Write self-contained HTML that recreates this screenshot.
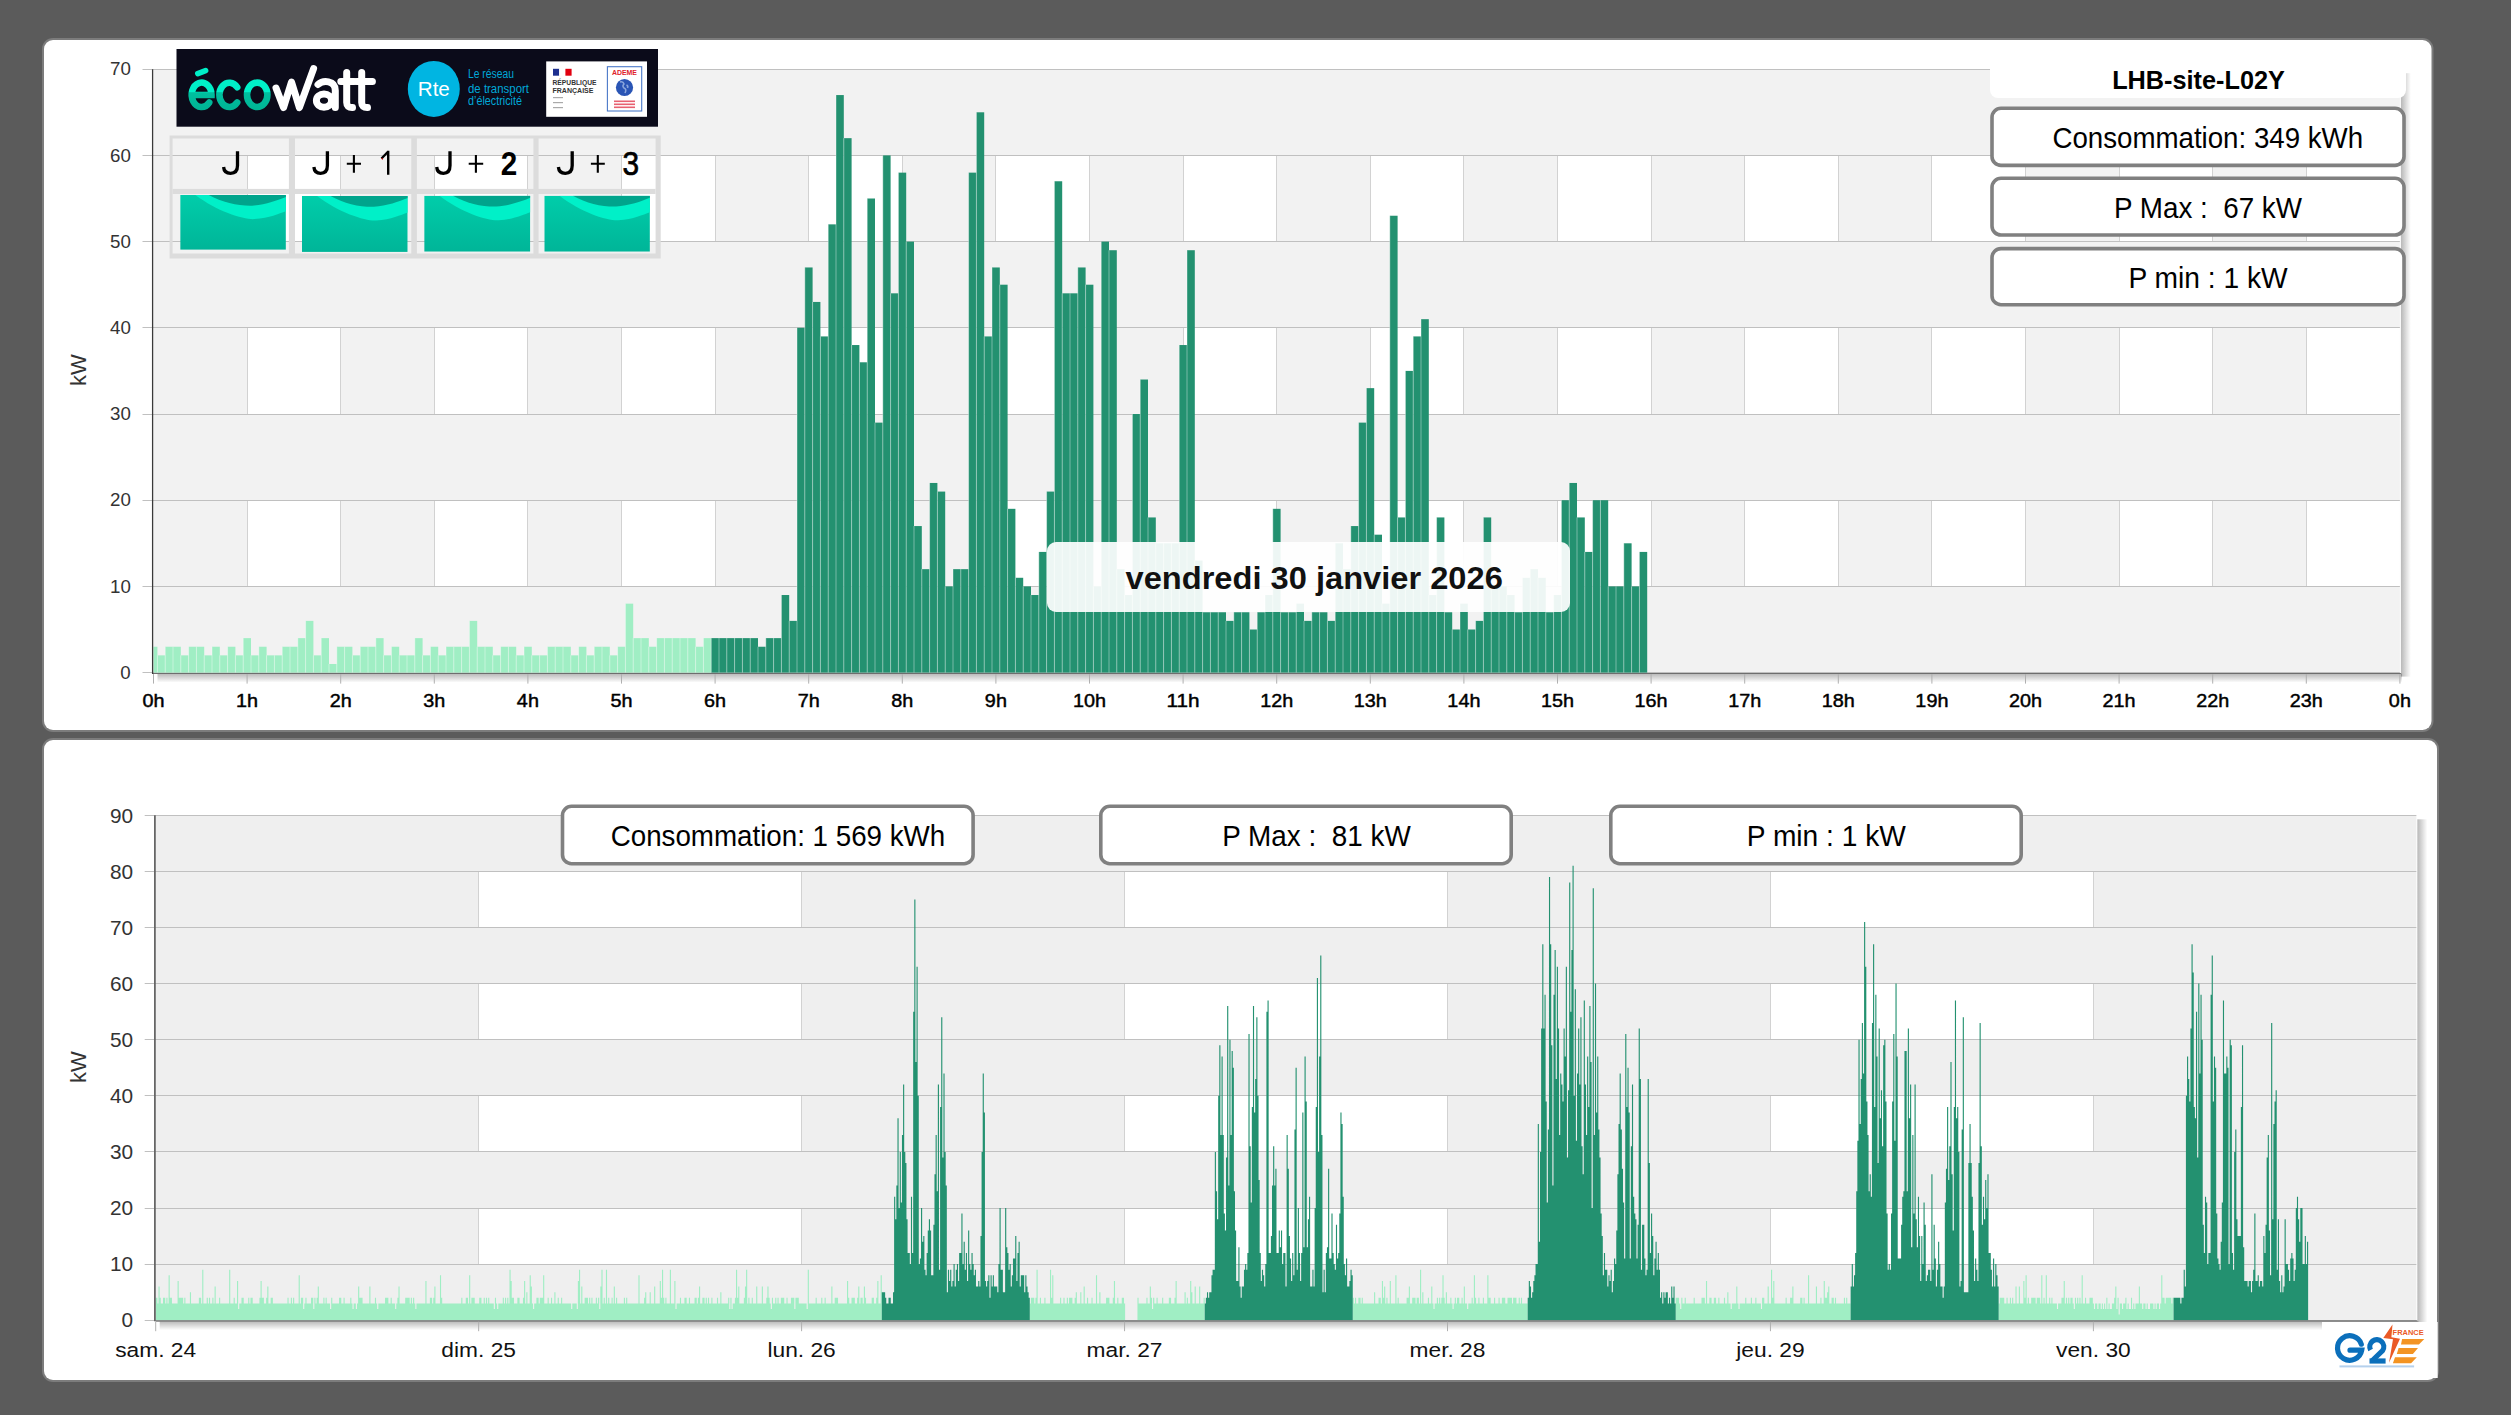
<!DOCTYPE html><html><head><meta charset="utf-8"><style>html,body{margin:0;padding:0;background:#5b5b5b;}body{width:2511px;height:1415px;overflow:hidden;} svg{display:block;}</style></head><body><svg width="2511" height="1415" viewBox="0 0 2511 1415"><defs><linearGradient id="shR" x1="0" x2="1" y1="0" y2="0"><stop offset="0" stop-color="#000" stop-opacity="0.28"/><stop offset="1" stop-color="#000" stop-opacity="0"/></linearGradient><linearGradient id="shB" x1="0" x2="0" y1="0" y2="1"><stop offset="0" stop-color="#000" stop-opacity="0.28"/><stop offset="1" stop-color="#000" stop-opacity="0"/></linearGradient><linearGradient id="teal" x1="0" x2="0" y1="0" y2="1"><stop offset="0" stop-color="#00cdaa"/><stop offset="1" stop-color="#00b598"/></linearGradient><linearGradient id="ecoG" x1="0" x2="0" y1="0" y2="1"><stop offset="0.55" stop-color="#00f0c8"/><stop offset="0.56" stop-color="#00bd9c"/><stop offset="1" stop-color="#00b092"/></linearGradient></defs><rect width="2511" height="1415" fill="#5b5b5b"/><rect x="42" y="38" width="2391.5" height="694" rx="11" fill="#7c7c7c"/><rect x="44" y="40" width="2387.5" height="690" rx="9" fill="#fff"/><rect x="42" y="738" width="2397" height="644" rx="11" fill="#7c7c7c"/><rect x="44" y="740" width="2393" height="640" rx="9" fill="#fff"/><rect x="153.50" y="69.20" width="2246.40" height="603.40" fill="#f2f2f2"/><rect x="247.10" y="500.20" width="93.60" height="86.20" fill="#fff"/><rect x="434.30" y="500.20" width="93.60" height="86.20" fill="#fff"/><rect x="621.50" y="500.20" width="93.60" height="86.20" fill="#fff"/><rect x="808.70" y="500.20" width="93.60" height="86.20" fill="#fff"/><rect x="995.90" y="500.20" width="93.60" height="86.20" fill="#fff"/><rect x="1183.10" y="500.20" width="93.60" height="86.20" fill="#fff"/><rect x="1370.30" y="500.20" width="93.60" height="86.20" fill="#fff"/><rect x="1557.50" y="500.20" width="93.60" height="86.20" fill="#fff"/><rect x="1744.70" y="500.20" width="93.60" height="86.20" fill="#fff"/><rect x="1931.90" y="500.20" width="93.60" height="86.20" fill="#fff"/><rect x="2119.10" y="500.20" width="93.60" height="86.20" fill="#fff"/><rect x="2306.30" y="500.20" width="93.60" height="86.20" fill="#fff"/><line x1="247.50" y1="500.20" x2="247.50" y2="586.40" stroke="#d2d2d2" stroke-width="1"/><line x1="340.50" y1="500.20" x2="340.50" y2="586.40" stroke="#d2d2d2" stroke-width="1"/><line x1="434.50" y1="500.20" x2="434.50" y2="586.40" stroke="#d2d2d2" stroke-width="1"/><line x1="527.50" y1="500.20" x2="527.50" y2="586.40" stroke="#d2d2d2" stroke-width="1"/><line x1="621.50" y1="500.20" x2="621.50" y2="586.40" stroke="#d2d2d2" stroke-width="1"/><line x1="715.50" y1="500.20" x2="715.50" y2="586.40" stroke="#d2d2d2" stroke-width="1"/><line x1="808.50" y1="500.20" x2="808.50" y2="586.40" stroke="#d2d2d2" stroke-width="1"/><line x1="902.50" y1="500.20" x2="902.50" y2="586.40" stroke="#d2d2d2" stroke-width="1"/><line x1="995.50" y1="500.20" x2="995.50" y2="586.40" stroke="#d2d2d2" stroke-width="1"/><line x1="1089.50" y1="500.20" x2="1089.50" y2="586.40" stroke="#d2d2d2" stroke-width="1"/><line x1="1183.50" y1="500.20" x2="1183.50" y2="586.40" stroke="#d2d2d2" stroke-width="1"/><line x1="1276.50" y1="500.20" x2="1276.50" y2="586.40" stroke="#d2d2d2" stroke-width="1"/><line x1="1370.50" y1="500.20" x2="1370.50" y2="586.40" stroke="#d2d2d2" stroke-width="1"/><line x1="1463.50" y1="500.20" x2="1463.50" y2="586.40" stroke="#d2d2d2" stroke-width="1"/><line x1="1557.50" y1="500.20" x2="1557.50" y2="586.40" stroke="#d2d2d2" stroke-width="1"/><line x1="1651.50" y1="500.20" x2="1651.50" y2="586.40" stroke="#d2d2d2" stroke-width="1"/><line x1="1744.50" y1="500.20" x2="1744.50" y2="586.40" stroke="#d2d2d2" stroke-width="1"/><line x1="1838.50" y1="500.20" x2="1838.50" y2="586.40" stroke="#d2d2d2" stroke-width="1"/><line x1="1931.50" y1="500.20" x2="1931.50" y2="586.40" stroke="#d2d2d2" stroke-width="1"/><line x1="2025.50" y1="500.20" x2="2025.50" y2="586.40" stroke="#d2d2d2" stroke-width="1"/><line x1="2119.50" y1="500.20" x2="2119.50" y2="586.40" stroke="#d2d2d2" stroke-width="1"/><line x1="2212.50" y1="500.20" x2="2212.50" y2="586.40" stroke="#d2d2d2" stroke-width="1"/><line x1="2306.50" y1="500.20" x2="2306.50" y2="586.40" stroke="#d2d2d2" stroke-width="1"/><rect x="247.10" y="327.80" width="93.60" height="86.20" fill="#fff"/><rect x="434.30" y="327.80" width="93.60" height="86.20" fill="#fff"/><rect x="621.50" y="327.80" width="93.60" height="86.20" fill="#fff"/><rect x="808.70" y="327.80" width="93.60" height="86.20" fill="#fff"/><rect x="995.90" y="327.80" width="93.60" height="86.20" fill="#fff"/><rect x="1183.10" y="327.80" width="93.60" height="86.20" fill="#fff"/><rect x="1370.30" y="327.80" width="93.60" height="86.20" fill="#fff"/><rect x="1557.50" y="327.80" width="93.60" height="86.20" fill="#fff"/><rect x="1744.70" y="327.80" width="93.60" height="86.20" fill="#fff"/><rect x="1931.90" y="327.80" width="93.60" height="86.20" fill="#fff"/><rect x="2119.10" y="327.80" width="93.60" height="86.20" fill="#fff"/><rect x="2306.30" y="327.80" width="93.60" height="86.20" fill="#fff"/><line x1="247.50" y1="327.80" x2="247.50" y2="414.00" stroke="#d2d2d2" stroke-width="1"/><line x1="340.50" y1="327.80" x2="340.50" y2="414.00" stroke="#d2d2d2" stroke-width="1"/><line x1="434.50" y1="327.80" x2="434.50" y2="414.00" stroke="#d2d2d2" stroke-width="1"/><line x1="527.50" y1="327.80" x2="527.50" y2="414.00" stroke="#d2d2d2" stroke-width="1"/><line x1="621.50" y1="327.80" x2="621.50" y2="414.00" stroke="#d2d2d2" stroke-width="1"/><line x1="715.50" y1="327.80" x2="715.50" y2="414.00" stroke="#d2d2d2" stroke-width="1"/><line x1="808.50" y1="327.80" x2="808.50" y2="414.00" stroke="#d2d2d2" stroke-width="1"/><line x1="902.50" y1="327.80" x2="902.50" y2="414.00" stroke="#d2d2d2" stroke-width="1"/><line x1="995.50" y1="327.80" x2="995.50" y2="414.00" stroke="#d2d2d2" stroke-width="1"/><line x1="1089.50" y1="327.80" x2="1089.50" y2="414.00" stroke="#d2d2d2" stroke-width="1"/><line x1="1183.50" y1="327.80" x2="1183.50" y2="414.00" stroke="#d2d2d2" stroke-width="1"/><line x1="1276.50" y1="327.80" x2="1276.50" y2="414.00" stroke="#d2d2d2" stroke-width="1"/><line x1="1370.50" y1="327.80" x2="1370.50" y2="414.00" stroke="#d2d2d2" stroke-width="1"/><line x1="1463.50" y1="327.80" x2="1463.50" y2="414.00" stroke="#d2d2d2" stroke-width="1"/><line x1="1557.50" y1="327.80" x2="1557.50" y2="414.00" stroke="#d2d2d2" stroke-width="1"/><line x1="1651.50" y1="327.80" x2="1651.50" y2="414.00" stroke="#d2d2d2" stroke-width="1"/><line x1="1744.50" y1="327.80" x2="1744.50" y2="414.00" stroke="#d2d2d2" stroke-width="1"/><line x1="1838.50" y1="327.80" x2="1838.50" y2="414.00" stroke="#d2d2d2" stroke-width="1"/><line x1="1931.50" y1="327.80" x2="1931.50" y2="414.00" stroke="#d2d2d2" stroke-width="1"/><line x1="2025.50" y1="327.80" x2="2025.50" y2="414.00" stroke="#d2d2d2" stroke-width="1"/><line x1="2119.50" y1="327.80" x2="2119.50" y2="414.00" stroke="#d2d2d2" stroke-width="1"/><line x1="2212.50" y1="327.80" x2="2212.50" y2="414.00" stroke="#d2d2d2" stroke-width="1"/><line x1="2306.50" y1="327.80" x2="2306.50" y2="414.00" stroke="#d2d2d2" stroke-width="1"/><rect x="247.10" y="155.40" width="93.60" height="86.20" fill="#fff"/><rect x="434.30" y="155.40" width="93.60" height="86.20" fill="#fff"/><rect x="621.50" y="155.40" width="93.60" height="86.20" fill="#fff"/><rect x="808.70" y="155.40" width="93.60" height="86.20" fill="#fff"/><rect x="995.90" y="155.40" width="93.60" height="86.20" fill="#fff"/><rect x="1183.10" y="155.40" width="93.60" height="86.20" fill="#fff"/><rect x="1370.30" y="155.40" width="93.60" height="86.20" fill="#fff"/><rect x="1557.50" y="155.40" width="93.60" height="86.20" fill="#fff"/><rect x="1744.70" y="155.40" width="93.60" height="86.20" fill="#fff"/><rect x="1931.90" y="155.40" width="93.60" height="86.20" fill="#fff"/><rect x="2119.10" y="155.40" width="93.60" height="86.20" fill="#fff"/><rect x="2306.30" y="155.40" width="93.60" height="86.20" fill="#fff"/><line x1="247.50" y1="155.40" x2="247.50" y2="241.60" stroke="#d2d2d2" stroke-width="1"/><line x1="340.50" y1="155.40" x2="340.50" y2="241.60" stroke="#d2d2d2" stroke-width="1"/><line x1="434.50" y1="155.40" x2="434.50" y2="241.60" stroke="#d2d2d2" stroke-width="1"/><line x1="527.50" y1="155.40" x2="527.50" y2="241.60" stroke="#d2d2d2" stroke-width="1"/><line x1="621.50" y1="155.40" x2="621.50" y2="241.60" stroke="#d2d2d2" stroke-width="1"/><line x1="715.50" y1="155.40" x2="715.50" y2="241.60" stroke="#d2d2d2" stroke-width="1"/><line x1="808.50" y1="155.40" x2="808.50" y2="241.60" stroke="#d2d2d2" stroke-width="1"/><line x1="902.50" y1="155.40" x2="902.50" y2="241.60" stroke="#d2d2d2" stroke-width="1"/><line x1="995.50" y1="155.40" x2="995.50" y2="241.60" stroke="#d2d2d2" stroke-width="1"/><line x1="1089.50" y1="155.40" x2="1089.50" y2="241.60" stroke="#d2d2d2" stroke-width="1"/><line x1="1183.50" y1="155.40" x2="1183.50" y2="241.60" stroke="#d2d2d2" stroke-width="1"/><line x1="1276.50" y1="155.40" x2="1276.50" y2="241.60" stroke="#d2d2d2" stroke-width="1"/><line x1="1370.50" y1="155.40" x2="1370.50" y2="241.60" stroke="#d2d2d2" stroke-width="1"/><line x1="1463.50" y1="155.40" x2="1463.50" y2="241.60" stroke="#d2d2d2" stroke-width="1"/><line x1="1557.50" y1="155.40" x2="1557.50" y2="241.60" stroke="#d2d2d2" stroke-width="1"/><line x1="1651.50" y1="155.40" x2="1651.50" y2="241.60" stroke="#d2d2d2" stroke-width="1"/><line x1="1744.50" y1="155.40" x2="1744.50" y2="241.60" stroke="#d2d2d2" stroke-width="1"/><line x1="1838.50" y1="155.40" x2="1838.50" y2="241.60" stroke="#d2d2d2" stroke-width="1"/><line x1="1931.50" y1="155.40" x2="1931.50" y2="241.60" stroke="#d2d2d2" stroke-width="1"/><line x1="2025.50" y1="155.40" x2="2025.50" y2="241.60" stroke="#d2d2d2" stroke-width="1"/><line x1="2119.50" y1="155.40" x2="2119.50" y2="241.60" stroke="#d2d2d2" stroke-width="1"/><line x1="2212.50" y1="155.40" x2="2212.50" y2="241.60" stroke="#d2d2d2" stroke-width="1"/><line x1="2306.50" y1="155.40" x2="2306.50" y2="241.60" stroke="#d2d2d2" stroke-width="1"/><line x1="142.50" y1="672.50" x2="2399.90" y2="672.50" stroke="#c0c0c0" stroke-width="1"/><line x1="142.50" y1="586.50" x2="2399.90" y2="586.50" stroke="#c0c0c0" stroke-width="1"/><line x1="142.50" y1="500.50" x2="2399.90" y2="500.50" stroke="#c0c0c0" stroke-width="1"/><line x1="142.50" y1="414.50" x2="2399.90" y2="414.50" stroke="#c0c0c0" stroke-width="1"/><line x1="142.50" y1="327.50" x2="2399.90" y2="327.50" stroke="#c0c0c0" stroke-width="1"/><line x1="142.50" y1="241.50" x2="2399.90" y2="241.50" stroke="#c0c0c0" stroke-width="1"/><line x1="142.50" y1="155.50" x2="2399.90" y2="155.50" stroke="#c0c0c0" stroke-width="1"/><line x1="142.50" y1="69.50" x2="2399.90" y2="69.50" stroke="#c0c0c0" stroke-width="1"/><rect x="153.50" y="646.74" width="3.90" height="25.86" fill="#a0eec4"/><rect x="157.40" y="655.36" width="7.80" height="17.24" fill="#a0eec4"/><rect x="165.20" y="646.74" width="7.80" height="25.86" fill="#a0eec4"/><rect x="173.00" y="646.74" width="7.80" height="25.86" fill="#a0eec4"/><rect x="180.80" y="655.36" width="7.80" height="17.24" fill="#a0eec4"/><rect x="188.60" y="646.74" width="7.80" height="25.86" fill="#a0eec4"/><rect x="196.40" y="646.74" width="7.80" height="25.86" fill="#a0eec4"/><rect x="204.20" y="655.36" width="7.80" height="17.24" fill="#a0eec4"/><rect x="212.00" y="646.74" width="7.80" height="25.86" fill="#a0eec4"/><rect x="219.80" y="655.36" width="7.80" height="17.24" fill="#a0eec4"/><rect x="227.60" y="646.74" width="7.80" height="25.86" fill="#a0eec4"/><rect x="235.40" y="655.36" width="7.80" height="17.24" fill="#a0eec4"/><rect x="243.20" y="638.12" width="7.80" height="34.48" fill="#a0eec4"/><rect x="251.00" y="655.36" width="7.80" height="17.24" fill="#a0eec4"/><rect x="258.80" y="646.74" width="7.80" height="25.86" fill="#a0eec4"/><rect x="266.60" y="655.36" width="7.80" height="17.24" fill="#a0eec4"/><rect x="274.40" y="655.36" width="7.80" height="17.24" fill="#a0eec4"/><rect x="282.20" y="646.74" width="7.80" height="25.86" fill="#a0eec4"/><rect x="290.00" y="646.74" width="7.80" height="25.86" fill="#a0eec4"/><rect x="297.80" y="638.12" width="7.80" height="34.48" fill="#a0eec4"/><rect x="305.60" y="620.88" width="7.80" height="51.72" fill="#a0eec4"/><rect x="313.40" y="655.36" width="7.80" height="17.24" fill="#a0eec4"/><rect x="321.20" y="638.12" width="7.80" height="34.48" fill="#a0eec4"/><rect x="329.00" y="663.98" width="7.80" height="8.62" fill="#a0eec4"/><rect x="336.80" y="646.74" width="7.80" height="25.86" fill="#a0eec4"/><rect x="344.60" y="646.74" width="7.80" height="25.86" fill="#a0eec4"/><rect x="352.40" y="655.36" width="7.80" height="17.24" fill="#a0eec4"/><rect x="360.20" y="646.74" width="7.80" height="25.86" fill="#a0eec4"/><rect x="368.00" y="646.74" width="7.80" height="25.86" fill="#a0eec4"/><rect x="375.80" y="638.12" width="7.80" height="34.48" fill="#a0eec4"/><rect x="383.60" y="655.36" width="7.80" height="17.24" fill="#a0eec4"/><rect x="391.40" y="646.74" width="7.80" height="25.86" fill="#a0eec4"/><rect x="399.20" y="655.36" width="7.80" height="17.24" fill="#a0eec4"/><rect x="407.00" y="655.36" width="7.80" height="17.24" fill="#a0eec4"/><rect x="414.80" y="638.12" width="7.80" height="34.48" fill="#a0eec4"/><rect x="422.60" y="655.36" width="7.80" height="17.24" fill="#a0eec4"/><rect x="430.40" y="646.74" width="7.80" height="25.86" fill="#a0eec4"/><rect x="438.20" y="655.36" width="7.80" height="17.24" fill="#a0eec4"/><rect x="446.00" y="646.74" width="7.80" height="25.86" fill="#a0eec4"/><rect x="453.80" y="646.74" width="7.80" height="25.86" fill="#a0eec4"/><rect x="461.60" y="646.74" width="7.80" height="25.86" fill="#a0eec4"/><rect x="469.40" y="620.88" width="7.80" height="51.72" fill="#a0eec4"/><rect x="477.20" y="646.74" width="7.80" height="25.86" fill="#a0eec4"/><rect x="485.00" y="646.74" width="7.80" height="25.86" fill="#a0eec4"/><rect x="492.80" y="655.36" width="7.80" height="17.24" fill="#a0eec4"/><rect x="500.60" y="646.74" width="7.80" height="25.86" fill="#a0eec4"/><rect x="508.40" y="646.74" width="7.80" height="25.86" fill="#a0eec4"/><rect x="516.20" y="655.36" width="7.80" height="17.24" fill="#a0eec4"/><rect x="524.00" y="646.74" width="7.80" height="25.86" fill="#a0eec4"/><rect x="531.80" y="655.36" width="7.80" height="17.24" fill="#a0eec4"/><rect x="539.60" y="655.36" width="7.80" height="17.24" fill="#a0eec4"/><rect x="547.40" y="646.74" width="7.80" height="25.86" fill="#a0eec4"/><rect x="555.20" y="646.74" width="7.80" height="25.86" fill="#a0eec4"/><rect x="563.00" y="646.74" width="7.80" height="25.86" fill="#a0eec4"/><rect x="570.80" y="655.36" width="7.80" height="17.24" fill="#a0eec4"/><rect x="578.60" y="646.74" width="7.80" height="25.86" fill="#a0eec4"/><rect x="586.40" y="655.36" width="7.80" height="17.24" fill="#a0eec4"/><rect x="594.20" y="646.74" width="7.80" height="25.86" fill="#a0eec4"/><rect x="602.00" y="646.74" width="7.80" height="25.86" fill="#a0eec4"/><rect x="609.80" y="655.36" width="7.80" height="17.24" fill="#a0eec4"/><rect x="617.60" y="646.74" width="7.80" height="25.86" fill="#a0eec4"/><rect x="625.40" y="603.64" width="7.80" height="68.96" fill="#a0eec4"/><rect x="633.20" y="638.12" width="7.80" height="34.48" fill="#a0eec4"/><rect x="641.00" y="638.12" width="7.80" height="34.48" fill="#a0eec4"/><rect x="648.80" y="646.74" width="7.80" height="25.86" fill="#a0eec4"/><rect x="656.60" y="638.12" width="7.80" height="34.48" fill="#a0eec4"/><rect x="664.40" y="638.12" width="7.80" height="34.48" fill="#a0eec4"/><rect x="672.20" y="638.12" width="7.80" height="34.48" fill="#a0eec4"/><rect x="680.00" y="638.12" width="7.80" height="34.48" fill="#a0eec4"/><rect x="687.80" y="638.12" width="7.80" height="34.48" fill="#a0eec4"/><rect x="695.60" y="646.74" width="7.80" height="25.86" fill="#a0eec4"/><rect x="703.40" y="638.12" width="7.80" height="34.48" fill="#a0eec4"/><rect x="711.20" y="638.12" width="7.80" height="34.48" fill="#239170"/><rect x="719.00" y="638.12" width="7.80" height="34.48" fill="#239170"/><rect x="726.80" y="638.12" width="7.80" height="34.48" fill="#239170"/><rect x="734.60" y="638.12" width="7.80" height="34.48" fill="#239170"/><rect x="742.40" y="638.12" width="7.80" height="34.48" fill="#239170"/><rect x="750.20" y="638.12" width="7.80" height="34.48" fill="#239170"/><rect x="758.00" y="646.74" width="7.80" height="25.86" fill="#239170"/><rect x="765.80" y="638.12" width="7.80" height="34.48" fill="#239170"/><rect x="773.60" y="638.12" width="7.80" height="34.48" fill="#239170"/><rect x="781.40" y="595.02" width="7.80" height="77.58" fill="#239170"/><rect x="789.20" y="620.88" width="7.80" height="51.72" fill="#239170"/><rect x="797.00" y="327.80" width="7.80" height="344.80" fill="#239170"/><rect x="804.80" y="267.46" width="7.80" height="405.14" fill="#239170"/><rect x="812.60" y="301.94" width="7.80" height="370.66" fill="#239170"/><rect x="820.40" y="336.42" width="7.80" height="336.18" fill="#239170"/><rect x="828.20" y="224.36" width="7.80" height="448.24" fill="#239170"/><rect x="836.00" y="95.06" width="7.80" height="577.54" fill="#239170"/><rect x="843.80" y="138.16" width="7.80" height="534.44" fill="#239170"/><rect x="851.60" y="345.04" width="7.80" height="327.56" fill="#239170"/><rect x="859.40" y="362.28" width="7.80" height="310.32" fill="#239170"/><rect x="867.20" y="198.50" width="7.80" height="474.10" fill="#239170"/><rect x="875.00" y="422.62" width="7.80" height="249.98" fill="#239170"/><rect x="882.80" y="155.40" width="7.80" height="517.20" fill="#239170"/><rect x="890.60" y="293.32" width="7.80" height="379.28" fill="#239170"/><rect x="898.40" y="172.64" width="7.80" height="499.96" fill="#239170"/><rect x="906.20" y="241.60" width="7.80" height="431.00" fill="#239170"/><rect x="914.00" y="526.06" width="7.80" height="146.54" fill="#239170"/><rect x="921.80" y="569.16" width="7.80" height="103.44" fill="#239170"/><rect x="929.60" y="482.96" width="7.80" height="189.64" fill="#239170"/><rect x="937.40" y="491.58" width="7.80" height="181.02" fill="#239170"/><rect x="945.20" y="586.40" width="7.80" height="86.20" fill="#239170"/><rect x="953.00" y="569.16" width="7.80" height="103.44" fill="#239170"/><rect x="960.80" y="569.16" width="7.80" height="103.44" fill="#239170"/><rect x="968.60" y="172.64" width="7.80" height="499.96" fill="#239170"/><rect x="976.40" y="112.30" width="7.80" height="560.30" fill="#239170"/><rect x="984.20" y="336.42" width="7.80" height="336.18" fill="#239170"/><rect x="992.00" y="267.46" width="7.80" height="405.14" fill="#239170"/><rect x="999.80" y="284.70" width="7.80" height="387.90" fill="#239170"/><rect x="1007.60" y="508.82" width="7.80" height="163.78" fill="#239170"/><rect x="1015.40" y="577.78" width="7.80" height="94.82" fill="#239170"/><rect x="1023.20" y="586.40" width="7.80" height="86.20" fill="#239170"/><rect x="1031.00" y="595.02" width="7.80" height="77.58" fill="#239170"/><rect x="1038.80" y="551.92" width="7.80" height="120.68" fill="#239170"/><rect x="1046.60" y="491.58" width="7.80" height="181.02" fill="#239170"/><rect x="1054.40" y="181.26" width="7.80" height="491.34" fill="#239170"/><rect x="1062.20" y="293.32" width="7.80" height="379.28" fill="#239170"/><rect x="1070.00" y="293.32" width="7.80" height="379.28" fill="#239170"/><rect x="1077.80" y="267.46" width="7.80" height="405.14" fill="#239170"/><rect x="1085.60" y="284.70" width="7.80" height="387.90" fill="#239170"/><rect x="1093.40" y="586.40" width="7.80" height="86.20" fill="#239170"/><rect x="1101.20" y="241.60" width="7.80" height="431.00" fill="#239170"/><rect x="1109.00" y="250.22" width="7.80" height="422.38" fill="#239170"/><rect x="1116.80" y="569.16" width="7.80" height="103.44" fill="#239170"/><rect x="1124.60" y="595.02" width="7.80" height="77.58" fill="#239170"/><rect x="1132.40" y="414.00" width="7.80" height="258.60" fill="#239170"/><rect x="1140.20" y="379.52" width="7.80" height="293.08" fill="#239170"/><rect x="1148.00" y="517.44" width="7.80" height="155.16" fill="#239170"/><rect x="1155.80" y="543.30" width="7.80" height="129.30" fill="#239170"/><rect x="1163.60" y="543.30" width="7.80" height="129.30" fill="#239170"/><rect x="1171.40" y="543.30" width="7.80" height="129.30" fill="#239170"/><rect x="1179.20" y="345.04" width="7.80" height="327.56" fill="#239170"/><rect x="1187.00" y="250.22" width="7.80" height="422.38" fill="#239170"/><rect x="1194.80" y="560.54" width="7.80" height="112.06" fill="#239170"/><rect x="1202.60" y="612.26" width="7.80" height="60.34" fill="#239170"/><rect x="1210.40" y="612.26" width="7.80" height="60.34" fill="#239170"/><rect x="1218.20" y="612.26" width="7.80" height="60.34" fill="#239170"/><rect x="1226.00" y="620.88" width="7.80" height="51.72" fill="#239170"/><rect x="1233.80" y="612.26" width="7.80" height="60.34" fill="#239170"/><rect x="1241.60" y="612.26" width="7.80" height="60.34" fill="#239170"/><rect x="1249.40" y="629.50" width="7.80" height="43.10" fill="#239170"/><rect x="1257.20" y="612.26" width="7.80" height="60.34" fill="#239170"/><rect x="1265.00" y="595.02" width="7.80" height="77.58" fill="#239170"/><rect x="1272.80" y="508.82" width="7.80" height="163.78" fill="#239170"/><rect x="1280.60" y="612.26" width="7.80" height="60.34" fill="#239170"/><rect x="1288.40" y="612.26" width="7.80" height="60.34" fill="#239170"/><rect x="1296.20" y="603.64" width="7.80" height="68.96" fill="#239170"/><rect x="1304.00" y="620.88" width="7.80" height="51.72" fill="#239170"/><rect x="1311.80" y="612.26" width="7.80" height="60.34" fill="#239170"/><rect x="1319.60" y="612.26" width="7.80" height="60.34" fill="#239170"/><rect x="1327.40" y="620.88" width="7.80" height="51.72" fill="#239170"/><rect x="1335.20" y="543.30" width="7.80" height="129.30" fill="#239170"/><rect x="1343.00" y="569.16" width="7.80" height="103.44" fill="#239170"/><rect x="1350.80" y="526.06" width="7.80" height="146.54" fill="#239170"/><rect x="1358.60" y="422.62" width="7.80" height="249.98" fill="#239170"/><rect x="1366.40" y="388.14" width="7.80" height="284.46" fill="#239170"/><rect x="1374.20" y="534.68" width="7.80" height="137.92" fill="#239170"/><rect x="1382.00" y="603.64" width="7.80" height="68.96" fill="#239170"/><rect x="1389.80" y="215.74" width="7.80" height="456.86" fill="#239170"/><rect x="1397.60" y="517.44" width="7.80" height="155.16" fill="#239170"/><rect x="1405.40" y="370.90" width="7.80" height="301.70" fill="#239170"/><rect x="1413.20" y="336.42" width="7.80" height="336.18" fill="#239170"/><rect x="1421.00" y="319.18" width="7.80" height="353.42" fill="#239170"/><rect x="1428.80" y="595.02" width="7.80" height="77.58" fill="#239170"/><rect x="1436.60" y="517.44" width="7.80" height="155.16" fill="#239170"/><rect x="1444.40" y="612.26" width="7.80" height="60.34" fill="#239170"/><rect x="1452.20" y="629.50" width="7.80" height="43.10" fill="#239170"/><rect x="1460.00" y="603.64" width="7.80" height="68.96" fill="#239170"/><rect x="1467.80" y="629.50" width="7.80" height="43.10" fill="#239170"/><rect x="1475.60" y="620.88" width="7.80" height="51.72" fill="#239170"/><rect x="1483.40" y="517.44" width="7.80" height="155.16" fill="#239170"/><rect x="1491.20" y="586.40" width="7.80" height="86.20" fill="#239170"/><rect x="1499.00" y="586.40" width="7.80" height="86.20" fill="#239170"/><rect x="1506.80" y="595.02" width="7.80" height="77.58" fill="#239170"/><rect x="1514.60" y="612.26" width="7.80" height="60.34" fill="#239170"/><rect x="1522.40" y="577.78" width="7.80" height="94.82" fill="#239170"/><rect x="1530.20" y="569.16" width="7.80" height="103.44" fill="#239170"/><rect x="1538.00" y="577.78" width="7.80" height="94.82" fill="#239170"/><rect x="1545.80" y="612.26" width="7.80" height="60.34" fill="#239170"/><rect x="1553.60" y="595.02" width="7.80" height="77.58" fill="#239170"/><rect x="1561.40" y="500.20" width="7.80" height="172.40" fill="#239170"/><rect x="1569.20" y="482.96" width="7.80" height="189.64" fill="#239170"/><rect x="1577.00" y="517.44" width="7.80" height="155.16" fill="#239170"/><rect x="1584.80" y="551.92" width="7.80" height="120.68" fill="#239170"/><rect x="1592.60" y="500.20" width="7.80" height="172.40" fill="#239170"/><rect x="1600.40" y="500.20" width="7.80" height="172.40" fill="#239170"/><rect x="1608.20" y="586.40" width="7.80" height="86.20" fill="#239170"/><rect x="1616.00" y="586.40" width="7.80" height="86.20" fill="#239170"/><rect x="1623.80" y="543.30" width="7.80" height="129.30" fill="#239170"/><rect x="1631.60" y="586.40" width="7.80" height="86.20" fill="#239170"/><rect x="1639.40" y="551.92" width="7.80" height="120.68" fill="#239170"/><path d="M157.40 655.36V672.60M165.20 646.74V672.60M173.00 646.74V672.60M180.80 655.36V672.60M188.60 646.74V672.60M196.40 646.74V672.60M204.20 655.36V672.60M212.00 646.74V672.60M219.80 655.36V672.60M227.60 646.74V672.60M235.40 655.36V672.60M243.20 638.12V672.60M251.00 655.36V672.60M258.80 646.74V672.60M266.60 655.36V672.60M274.40 655.36V672.60M282.20 646.74V672.60M290.00 646.74V672.60M297.80 638.12V672.60M305.60 620.88V672.60M313.40 655.36V672.60M321.20 638.12V672.60M329.00 663.98V672.60M336.80 646.74V672.60M344.60 646.74V672.60M352.40 655.36V672.60M360.20 646.74V672.60M368.00 646.74V672.60M375.80 638.12V672.60M383.60 655.36V672.60M391.40 646.74V672.60M399.20 655.36V672.60M407.00 655.36V672.60M414.80 638.12V672.60M422.60 655.36V672.60M430.40 646.74V672.60M438.20 655.36V672.60M446.00 646.74V672.60M453.80 646.74V672.60M461.60 646.74V672.60M469.40 620.88V672.60M477.20 646.74V672.60M485.00 646.74V672.60M492.80 655.36V672.60M500.60 646.74V672.60M508.40 646.74V672.60M516.20 655.36V672.60M524.00 646.74V672.60M531.80 655.36V672.60M539.60 655.36V672.60M547.40 646.74V672.60M555.20 646.74V672.60M563.00 646.74V672.60M570.80 655.36V672.60M578.60 646.74V672.60M586.40 655.36V672.60M594.20 646.74V672.60M602.00 646.74V672.60M609.80 655.36V672.60M617.60 646.74V672.60M625.40 603.64V672.60M633.20 638.12V672.60M641.00 638.12V672.60M648.80 646.74V672.60M656.60 638.12V672.60M664.40 638.12V672.60M672.20 638.12V672.60M680.00 638.12V672.60M687.80 638.12V672.60M695.60 646.74V672.60M703.40 638.12V672.60M711.20 638.12V672.60M719.00 638.12V672.60M726.80 638.12V672.60M734.60 638.12V672.60M742.40 638.12V672.60M750.20 638.12V672.60M758.00 646.74V672.60M765.80 638.12V672.60M773.60 638.12V672.60M781.40 595.02V672.60M789.20 620.88V672.60M797.00 327.80V672.60M804.80 267.46V672.60M812.60 301.94V672.60M820.40 336.42V672.60M828.20 224.36V672.60M836.00 95.06V672.60M843.80 138.16V672.60M851.60 345.04V672.60M859.40 362.28V672.60M867.20 198.50V672.60M875.00 422.62V672.60M882.80 155.40V672.60M890.60 293.32V672.60M898.40 172.64V672.60M906.20 241.60V672.60M914.00 526.06V672.60M921.80 569.16V672.60M929.60 482.96V672.60M937.40 491.58V672.60M945.20 586.40V672.60M953.00 569.16V672.60M960.80 569.16V672.60M968.60 172.64V672.60M976.40 112.30V672.60M984.20 336.42V672.60M992.00 267.46V672.60M999.80 284.70V672.60M1007.60 508.82V672.60M1015.40 577.78V672.60M1023.20 586.40V672.60M1031.00 595.02V672.60M1038.80 551.92V672.60M1046.60 491.58V672.60M1054.40 181.26V672.60M1062.20 293.32V672.60M1070.00 293.32V672.60M1077.80 267.46V672.60M1085.60 284.70V672.60M1093.40 586.40V672.60M1101.20 241.60V672.60M1109.00 250.22V672.60M1116.80 569.16V672.60M1124.60 595.02V672.60M1132.40 414.00V672.60M1140.20 379.52V672.60M1148.00 517.44V672.60M1155.80 543.30V672.60M1163.60 543.30V672.60M1171.40 543.30V672.60M1179.20 345.04V672.60M1187.00 250.22V672.60M1194.80 560.54V672.60M1202.60 612.26V672.60M1210.40 612.26V672.60M1218.20 612.26V672.60M1226.00 620.88V672.60M1233.80 612.26V672.60M1241.60 612.26V672.60M1249.40 629.50V672.60M1257.20 612.26V672.60M1265.00 595.02V672.60M1272.80 508.82V672.60M1280.60 612.26V672.60M1288.40 612.26V672.60M1296.20 603.64V672.60M1304.00 620.88V672.60M1311.80 612.26V672.60M1319.60 612.26V672.60M1327.40 620.88V672.60M1335.20 543.30V672.60M1343.00 569.16V672.60M1350.80 526.06V672.60M1358.60 422.62V672.60M1366.40 388.14V672.60M1374.20 534.68V672.60M1382.00 603.64V672.60M1389.80 215.74V672.60M1397.60 517.44V672.60M1405.40 370.90V672.60M1413.20 336.42V672.60M1421.00 319.18V672.60M1428.80 595.02V672.60M1436.60 517.44V672.60M1444.40 612.26V672.60M1452.20 629.50V672.60M1460.00 603.64V672.60M1467.80 629.50V672.60M1475.60 620.88V672.60M1483.40 517.44V672.60M1491.20 586.40V672.60M1499.00 586.40V672.60M1506.80 595.02V672.60M1514.60 612.26V672.60M1522.40 577.78V672.60M1530.20 569.16V672.60M1538.00 577.78V672.60M1545.80 612.26V672.60M1553.60 595.02V672.60M1561.40 500.20V672.60M1569.20 482.96V672.60M1577.00 517.44V672.60M1584.80 551.92V672.60M1592.60 500.20V672.60M1600.40 500.20V672.60M1608.20 586.40V672.60M1616.00 586.40V672.60M1623.80 543.30V672.60M1631.60 586.40V672.60M1639.40 551.92V672.60" stroke="#fff" stroke-opacity="0.38" stroke-width="1" fill="none"/><rect x="2400.90" y="73.20" width="10" height="603.40" fill="url(#shR)"/><rect x="157.50" y="673.60" width="2244.40" height="9" fill="url(#shB)"/><line x1="152.5" y1="673.5" x2="2400.90" y2="673.5" stroke="#6e6e6e" stroke-width="1.2"/><line x1="152.6" y1="69.20" x2="152.6" y2="674" stroke="#3a3a3a" stroke-width="1.3"/><line x1="153.50" y1="674.10" x2="153.50" y2="683.60" stroke="#b0b0b0" stroke-width="1"/><text x="142.49" y="706.7" font-family='"Liberation Sans", sans-serif' font-size="18" textLength="22.02" lengthAdjust="spacingAndGlyphs" fill="#000" stroke="#000" stroke-width="0.45">0h</text><line x1="247.10" y1="674.10" x2="247.10" y2="683.60" stroke="#b0b0b0" stroke-width="1"/><text x="236.09" y="706.7" font-family='"Liberation Sans", sans-serif' font-size="18" textLength="22.02" lengthAdjust="spacingAndGlyphs" fill="#000" stroke="#000" stroke-width="0.45">1h</text><line x1="340.70" y1="674.10" x2="340.70" y2="683.60" stroke="#b0b0b0" stroke-width="1"/><text x="329.69" y="706.7" font-family='"Liberation Sans", sans-serif' font-size="18" textLength="22.02" lengthAdjust="spacingAndGlyphs" fill="#000" stroke="#000" stroke-width="0.45">2h</text><line x1="434.30" y1="674.10" x2="434.30" y2="683.60" stroke="#b0b0b0" stroke-width="1"/><text x="423.29" y="706.7" font-family='"Liberation Sans", sans-serif' font-size="18" textLength="22.02" lengthAdjust="spacingAndGlyphs" fill="#000" stroke="#000" stroke-width="0.45">3h</text><line x1="527.90" y1="674.10" x2="527.90" y2="683.60" stroke="#b0b0b0" stroke-width="1"/><text x="516.89" y="706.7" font-family='"Liberation Sans", sans-serif' font-size="18" textLength="22.02" lengthAdjust="spacingAndGlyphs" fill="#000" stroke="#000" stroke-width="0.45">4h</text><line x1="621.50" y1="674.10" x2="621.50" y2="683.60" stroke="#b0b0b0" stroke-width="1"/><text x="610.49" y="706.7" font-family='"Liberation Sans", sans-serif' font-size="18" textLength="22.02" lengthAdjust="spacingAndGlyphs" fill="#000" stroke="#000" stroke-width="0.45">5h</text><line x1="715.10" y1="674.10" x2="715.10" y2="683.60" stroke="#b0b0b0" stroke-width="1"/><text x="704.09" y="706.7" font-family='"Liberation Sans", sans-serif' font-size="18" textLength="22.02" lengthAdjust="spacingAndGlyphs" fill="#000" stroke="#000" stroke-width="0.45">6h</text><line x1="808.70" y1="674.10" x2="808.70" y2="683.60" stroke="#b0b0b0" stroke-width="1"/><text x="797.69" y="706.7" font-family='"Liberation Sans", sans-serif' font-size="18" textLength="22.02" lengthAdjust="spacingAndGlyphs" fill="#000" stroke="#000" stroke-width="0.45">7h</text><line x1="902.30" y1="674.10" x2="902.30" y2="683.60" stroke="#b0b0b0" stroke-width="1"/><text x="891.29" y="706.7" font-family='"Liberation Sans", sans-serif' font-size="18" textLength="22.02" lengthAdjust="spacingAndGlyphs" fill="#000" stroke="#000" stroke-width="0.45">8h</text><line x1="995.90" y1="674.10" x2="995.90" y2="683.60" stroke="#b0b0b0" stroke-width="1"/><text x="984.89" y="706.7" font-family='"Liberation Sans", sans-serif' font-size="18" textLength="22.02" lengthAdjust="spacingAndGlyphs" fill="#000" stroke="#000" stroke-width="0.45">9h</text><line x1="1089.50" y1="674.10" x2="1089.50" y2="683.60" stroke="#b0b0b0" stroke-width="1"/><text x="1072.98" y="706.7" font-family='"Liberation Sans", sans-serif' font-size="18" textLength="33.03" lengthAdjust="spacingAndGlyphs" fill="#000" stroke="#000" stroke-width="0.45">10h</text><line x1="1183.10" y1="674.10" x2="1183.10" y2="683.60" stroke="#b0b0b0" stroke-width="1"/><text x="1166.58" y="706.7" font-family='"Liberation Sans", sans-serif' font-size="18" textLength="33.03" lengthAdjust="spacingAndGlyphs" fill="#000" stroke="#000" stroke-width="0.45">11h</text><line x1="1276.70" y1="674.10" x2="1276.70" y2="683.60" stroke="#b0b0b0" stroke-width="1"/><text x="1260.18" y="706.7" font-family='"Liberation Sans", sans-serif' font-size="18" textLength="33.03" lengthAdjust="spacingAndGlyphs" fill="#000" stroke="#000" stroke-width="0.45">12h</text><line x1="1370.30" y1="674.10" x2="1370.30" y2="683.60" stroke="#b0b0b0" stroke-width="1"/><text x="1353.78" y="706.7" font-family='"Liberation Sans", sans-serif' font-size="18" textLength="33.03" lengthAdjust="spacingAndGlyphs" fill="#000" stroke="#000" stroke-width="0.45">13h</text><line x1="1463.90" y1="674.10" x2="1463.90" y2="683.60" stroke="#b0b0b0" stroke-width="1"/><text x="1447.38" y="706.7" font-family='"Liberation Sans", sans-serif' font-size="18" textLength="33.03" lengthAdjust="spacingAndGlyphs" fill="#000" stroke="#000" stroke-width="0.45">14h</text><line x1="1557.50" y1="674.10" x2="1557.50" y2="683.60" stroke="#b0b0b0" stroke-width="1"/><text x="1540.98" y="706.7" font-family='"Liberation Sans", sans-serif' font-size="18" textLength="33.03" lengthAdjust="spacingAndGlyphs" fill="#000" stroke="#000" stroke-width="0.45">15h</text><line x1="1651.10" y1="674.10" x2="1651.10" y2="683.60" stroke="#b0b0b0" stroke-width="1"/><text x="1634.58" y="706.7" font-family='"Liberation Sans", sans-serif' font-size="18" textLength="33.03" lengthAdjust="spacingAndGlyphs" fill="#000" stroke="#000" stroke-width="0.45">16h</text><line x1="1744.70" y1="674.10" x2="1744.70" y2="683.60" stroke="#b0b0b0" stroke-width="1"/><text x="1728.18" y="706.7" font-family='"Liberation Sans", sans-serif' font-size="18" textLength="33.03" lengthAdjust="spacingAndGlyphs" fill="#000" stroke="#000" stroke-width="0.45">17h</text><line x1="1838.30" y1="674.10" x2="1838.30" y2="683.60" stroke="#b0b0b0" stroke-width="1"/><text x="1821.78" y="706.7" font-family='"Liberation Sans", sans-serif' font-size="18" textLength="33.03" lengthAdjust="spacingAndGlyphs" fill="#000" stroke="#000" stroke-width="0.45">18h</text><line x1="1931.90" y1="674.10" x2="1931.90" y2="683.60" stroke="#b0b0b0" stroke-width="1"/><text x="1915.38" y="706.7" font-family='"Liberation Sans", sans-serif' font-size="18" textLength="33.03" lengthAdjust="spacingAndGlyphs" fill="#000" stroke="#000" stroke-width="0.45">19h</text><line x1="2025.50" y1="674.10" x2="2025.50" y2="683.60" stroke="#b0b0b0" stroke-width="1"/><text x="2008.98" y="706.7" font-family='"Liberation Sans", sans-serif' font-size="18" textLength="33.03" lengthAdjust="spacingAndGlyphs" fill="#000" stroke="#000" stroke-width="0.45">20h</text><line x1="2119.10" y1="674.10" x2="2119.10" y2="683.60" stroke="#b0b0b0" stroke-width="1"/><text x="2102.58" y="706.7" font-family='"Liberation Sans", sans-serif' font-size="18" textLength="33.03" lengthAdjust="spacingAndGlyphs" fill="#000" stroke="#000" stroke-width="0.45">21h</text><line x1="2212.70" y1="674.10" x2="2212.70" y2="683.60" stroke="#b0b0b0" stroke-width="1"/><text x="2196.18" y="706.7" font-family='"Liberation Sans", sans-serif' font-size="18" textLength="33.03" lengthAdjust="spacingAndGlyphs" fill="#000" stroke="#000" stroke-width="0.45">22h</text><line x1="2306.30" y1="674.10" x2="2306.30" y2="683.60" stroke="#b0b0b0" stroke-width="1"/><text x="2289.78" y="706.7" font-family='"Liberation Sans", sans-serif' font-size="18" textLength="33.03" lengthAdjust="spacingAndGlyphs" fill="#000" stroke="#000" stroke-width="0.45">23h</text><line x1="2399.90" y1="674.10" x2="2399.90" y2="683.60" stroke="#b0b0b0" stroke-width="1"/><text x="2388.89" y="706.7" font-family='"Liberation Sans", sans-serif' font-size="18" textLength="22.02" lengthAdjust="spacingAndGlyphs" fill="#000" stroke="#000" stroke-width="0.45">0h</text><text x="120.39" y="678.80" font-family='"Liberation Sans", sans-serif' font-size="17.5" textLength="10.41" lengthAdjust="spacingAndGlyphs" fill="#333">0</text><text x="109.97" y="592.60" font-family='"Liberation Sans", sans-serif' font-size="17.5" textLength="20.83" lengthAdjust="spacingAndGlyphs" fill="#333">10</text><text x="109.97" y="506.40" font-family='"Liberation Sans", sans-serif' font-size="17.5" textLength="20.83" lengthAdjust="spacingAndGlyphs" fill="#333">20</text><text x="109.97" y="420.20" font-family='"Liberation Sans", sans-serif' font-size="17.5" textLength="20.83" lengthAdjust="spacingAndGlyphs" fill="#333">30</text><text x="109.97" y="334.00" font-family='"Liberation Sans", sans-serif' font-size="17.5" textLength="20.83" lengthAdjust="spacingAndGlyphs" fill="#333">40</text><text x="109.97" y="247.80" font-family='"Liberation Sans", sans-serif' font-size="17.5" textLength="20.83" lengthAdjust="spacingAndGlyphs" fill="#333">50</text><text x="109.97" y="161.60" font-family='"Liberation Sans", sans-serif' font-size="17.5" textLength="20.83" lengthAdjust="spacingAndGlyphs" fill="#333">60</text><text x="109.97" y="75.40" font-family='"Liberation Sans", sans-serif' font-size="17.5" textLength="20.83" lengthAdjust="spacingAndGlyphs" fill="#333">70</text><text transform="translate(85.5 370) rotate(-90)" text-anchor="middle" font-family='"Liberation Sans", sans-serif' font-size="22" fill="#333">kW</text><rect x="1047" y="542" width="523" height="70" rx="9" fill="#fff" fill-opacity="0.92"/><text x="1125.5" y="588.8" font-family='"Liberation Sans", sans-serif' font-weight="bold" font-size="31" textLength="377.3" lengthAdjust="spacingAndGlyphs" fill="#111">vendredi 30 janvier 2026</text><rect x="1990" y="60" width="416" height="38" rx="8" fill="#fff"/><text x="2112.2" y="89.1" font-family='"Liberation Sans", sans-serif' font-weight="bold" font-size="25.5" textLength="172.7" lengthAdjust="spacingAndGlyphs" fill="#000">LHB-site-L02Y</text><rect x="1992.00" y="108.30" width="412.00" height="57.10" rx="9" fill="#fff" stroke="#808080" stroke-width="3.6"/><text x="2052.4" y="148.3" font-family='"Liberation Sans", sans-serif' font-size="30" textLength="310.7" lengthAdjust="spacingAndGlyphs" fill="#000" xml:space="preserve">Consommation: 349 kWh</text><rect x="1992.00" y="178.30" width="412.00" height="56.70" rx="9" fill="#fff" stroke="#808080" stroke-width="3.6"/><text x="2114" y="218" font-family='"Liberation Sans", sans-serif' font-size="30" textLength="188" lengthAdjust="spacingAndGlyphs" fill="#000" xml:space="preserve">P Max :  67 kW</text><rect x="1992.00" y="248.60" width="412.00" height="56.10" rx="9" fill="#fff" stroke="#808080" stroke-width="3.6"/><text x="2128.4" y="288.2" font-family='"Liberation Sans", sans-serif' font-size="30" textLength="159.3" lengthAdjust="spacingAndGlyphs" fill="#000" xml:space="preserve">P min : 1 kW</text><rect x="176.5" y="49" width="481.5" height="77.7" fill="#0b0b1a"/><linearGradient id="ecoS" gradientUnits="userSpaceOnUse" x1="0" y1="70" x2="0" y2="112"><stop offset="0.52" stop-color="#00f0c8"/><stop offset="0.54" stop-color="#00bf9f"/><stop offset="1" stop-color="#00b393"/></linearGradient><g fill="none" stroke="url(#ecoS)" stroke-width="6.6" stroke-linecap="round"><path d="M191.8 95H211.5A9.9 12.2 0 1 0 209.2 102.6"/><path d="M237.2 87.3A10 12.1 0 1 0 237.2 102.4"/><ellipse cx="257.2" cy="94.8" rx="10.2" ry="12.2"/><path d="M197.8 73.6L205.6 70.6" stroke="#00f0c8" stroke-width="5.6"/></g><g fill="none" stroke="#fff" stroke-width="7" stroke-linecap="round" stroke-linejoin="round"><path d="M276 88L283.5 107.6L291.5 82L299.4 107.6L313.6 68.6"/><path d="M318 84.5C323 80 335.3 80 335.3 90.5V107.6"/><ellipse cx="324" cy="100.6" rx="7.6" ry="6.6"/><path d="M346.7 72.5V102.5Q346.7 107.8 352.5 107.6M340.8 81.6H354.2"/><path d="M361.7 72.5V102.5Q361.7 107.8 367.5 107.6M356.8 81.6H372.4"/></g><ellipse cx="433.8" cy="88.9" rx="26" ry="28" fill="#00b5e2"/><text x="433.8" y="96" text-anchor="middle" font-family='"Liberation Sans", sans-serif' font-size="20" textLength="32" lengthAdjust="spacingAndGlyphs" fill="#fff">Rte</text><text x="468" y="78.3" font-family='"Liberation Sans", sans-serif' font-size="12.5" textLength="46" lengthAdjust="spacingAndGlyphs" fill="#00a8d8">Le réseau</text><text x="468" y="92.5" font-family='"Liberation Sans", sans-serif' font-size="12.5" textLength="61" lengthAdjust="spacingAndGlyphs" fill="#00a8d8">de transport</text><text x="468" y="104.7" font-family='"Liberation Sans", sans-serif' font-size="12.5" textLength="54" lengthAdjust="spacingAndGlyphs" fill="#00a8d8">d’électricité</text><rect x="546.2" y="61.4" width="100.8" height="55.4" fill="#fff"/><rect x="553" y="68.8" width="6.2" height="6.9" fill="#1d2f8f"/><rect x="559.2" y="68.8" width="6.2" height="6.9" fill="#fff"/><rect x="565.4" y="68.8" width="6.2" height="6.9" fill="#e1000f"/><text x="552.5" y="85" font-family='"Liberation Sans", sans-serif' font-weight="bold" font-size="7.5" textLength="44" lengthAdjust="spacingAndGlyphs" fill="#333">RÉPUBLIQUE</text><text x="552.5" y="92.5" font-family='"Liberation Sans", sans-serif' font-weight="bold" font-size="7.5" textLength="41" lengthAdjust="spacingAndGlyphs" fill="#333">FRANÇAISE</text><rect x="553" y="97" width="10" height="1.2" fill="#aaa"/><rect x="553" y="102" width="10" height="1.2" fill="#aaa"/><rect x="553" y="107" width="10" height="1.2" fill="#aaa"/><rect x="607.4" y="66.7" width="34.3" height="44.3" fill="#fff" stroke="#4a78c8" stroke-width="1.1"/><text x="624.5" y="75" text-anchor="middle" font-family='"Liberation Sans", sans-serif' font-weight="bold" font-size="6.5" textLength="25" lengthAdjust="spacingAndGlyphs" fill="#e0202a">ADEME</text><circle cx="624.5" cy="87.5" r="8.6" fill="#2a55b5"/><path d="M620 82 q3 -1 4 2 q-2 2 0 4 q3 1 1 5 M626.5 85 q2 1 1 3" stroke="#8aa6dc" stroke-width="1.6" fill="none"/><rect x="614" y="100.5" width="21" height="1.6" fill="#e86070"/><rect x="614" y="103.5" width="21" height="1.6" fill="#e86070"/><rect x="614" y="106.5" width="21" height="1.6" fill="#e86070"/><path d="M169.6 135.6H660.7V258.5H169.6Z M172.6 138.6V253.4H288.9V138.6Z M295 138.6V253.4H411.3V138.6Z M416.9 138.6V253.4H533.4V138.6Z M538.6 138.6V253.4H655.6V138.6Z" fill="#dcdcdc" fill-rule="evenodd"/><rect x="172.6" y="188.9" width="483" height="5.1" fill="#dcdcdc"/><path d="M237.5 151.3V165.5Q237.5 173.3 230.6 173.3Q224.1 173.3 223.6 167" fill="none" stroke="#000" stroke-width="3.3"/><path d="M327.4 151.3V165.5Q327.4 173.3 320.6 173.3Q314.4 173.3 313.9 167" fill="none" stroke="#000" stroke-width="3.3"/><path d="M346.8 163.8H361.0M353.9 155V172.7" fill="none" stroke="#000" stroke-width="2.1"/><path d="M388.2 150.8V174.7M388.2 151.5L381.5 158.5" fill="none" stroke="#000" stroke-width="2.4"/><path d="M381.6 158.2l1.2 1.2" stroke="#c00" stroke-width="1.2"/><path d="M450.0 151.3V165.5Q450.0 173.3 443.4 173.3Q437.2 173.3 436.7 167" fill="none" stroke="#000" stroke-width="3.3"/><path d="M468.7 163.8H483.2M475.9 155V172.7" fill="none" stroke="#000" stroke-width="2.1"/><text x="500.8" y="175" font-family='"Liberation Sans", sans-serif' font-weight="bold" font-size="34" textLength="16.5" lengthAdjust="spacingAndGlyphs" fill="#000">2</text><path d="M572.2 151.3V165.5Q572.2 173.3 565.3 173.3Q558.9 173.3 558.4 167" fill="none" stroke="#000" stroke-width="3.3"/><path d="M590.9 163.8H604.8M597.8 155V172.7" fill="none" stroke="#000" stroke-width="2.1"/><text x="622.4" y="175" font-family='"Liberation Sans", sans-serif' font-size="34" textLength="16.6" lengthAdjust="spacingAndGlyphs" fill="#000" stroke="#000" stroke-width="0.7">3</text><svg x="180.2" y="195" width="105.7" height="54.8" viewBox="0 0 100 100" preserveAspectRatio="none"><rect width="100" height="100" fill="url(#teal)"/><path d="M14.4 0C35 30 60 45 70 44C85 42 93 34 100 29.6V0Z" fill="#00f0c8"/><path d="M27 0C40 14 55 20 68 19.4C80 18 92 10 100 3.7V0Z" fill="#00a48c"/></svg><svg x="302" y="196" width="105.7" height="55.9" viewBox="0 0 100 100" preserveAspectRatio="none"><rect width="100" height="100" fill="url(#teal)"/><path d="M14.4 0C35 30 60 45 70 44C85 42 93 34 100 29.6V0Z" fill="#00f0c8"/><path d="M27 0C40 14 55 20 68 19.4C80 18 92 10 100 3.7V0Z" fill="#00a48c"/></svg><svg x="424.2" y="195.7" width="106.1" height="56" viewBox="0 0 100 100" preserveAspectRatio="none"><rect width="100" height="100" fill="url(#teal)"/><path d="M14.4 0C35 30 60 45 70 44C85 42 93 34 100 29.6V0Z" fill="#00f0c8"/><path d="M27 0C40 14 55 20 68 19.4C80 18 92 10 100 3.7V0Z" fill="#00a48c"/></svg><svg x="544.3" y="195.7" width="105.6" height="56" viewBox="0 0 100 100" preserveAspectRatio="none"><rect width="100" height="100" fill="url(#teal)"/><path d="M14.4 0C35 30 60 45 70 44C85 42 93 34 100 29.6V0Z" fill="#00f0c8"/><path d="M27 0C40 14 55 20 68 19.4C80 18 92 10 100 3.7V0Z" fill="#00a48c"/></svg><rect x="155.70" y="815.30" width="2260.65" height="504.90" fill="#efefef"/><rect x="478.65" y="1208.00" width="322.95" height="56.10" fill="#fff"/><rect x="1124.55" y="1208.00" width="322.95" height="56.10" fill="#fff"/><rect x="1770.45" y="1208.00" width="322.95" height="56.10" fill="#fff"/><line x1="478.50" y1="1208.00" x2="478.50" y2="1264.10" stroke="#d2d2d2" stroke-width="1"/><line x1="801.50" y1="1208.00" x2="801.50" y2="1264.10" stroke="#d2d2d2" stroke-width="1"/><line x1="1124.50" y1="1208.00" x2="1124.50" y2="1264.10" stroke="#d2d2d2" stroke-width="1"/><line x1="1447.50" y1="1208.00" x2="1447.50" y2="1264.10" stroke="#d2d2d2" stroke-width="1"/><line x1="1770.50" y1="1208.00" x2="1770.50" y2="1264.10" stroke="#d2d2d2" stroke-width="1"/><line x1="2093.50" y1="1208.00" x2="2093.50" y2="1264.10" stroke="#d2d2d2" stroke-width="1"/><rect x="478.65" y="1095.80" width="322.95" height="56.10" fill="#fff"/><rect x="1124.55" y="1095.80" width="322.95" height="56.10" fill="#fff"/><rect x="1770.45" y="1095.80" width="322.95" height="56.10" fill="#fff"/><line x1="478.50" y1="1095.80" x2="478.50" y2="1151.90" stroke="#d2d2d2" stroke-width="1"/><line x1="801.50" y1="1095.80" x2="801.50" y2="1151.90" stroke="#d2d2d2" stroke-width="1"/><line x1="1124.50" y1="1095.80" x2="1124.50" y2="1151.90" stroke="#d2d2d2" stroke-width="1"/><line x1="1447.50" y1="1095.80" x2="1447.50" y2="1151.90" stroke="#d2d2d2" stroke-width="1"/><line x1="1770.50" y1="1095.80" x2="1770.50" y2="1151.90" stroke="#d2d2d2" stroke-width="1"/><line x1="2093.50" y1="1095.80" x2="2093.50" y2="1151.90" stroke="#d2d2d2" stroke-width="1"/><rect x="478.65" y="983.60" width="322.95" height="56.10" fill="#fff"/><rect x="1124.55" y="983.60" width="322.95" height="56.10" fill="#fff"/><rect x="1770.45" y="983.60" width="322.95" height="56.10" fill="#fff"/><line x1="478.50" y1="983.60" x2="478.50" y2="1039.70" stroke="#d2d2d2" stroke-width="1"/><line x1="801.50" y1="983.60" x2="801.50" y2="1039.70" stroke="#d2d2d2" stroke-width="1"/><line x1="1124.50" y1="983.60" x2="1124.50" y2="1039.70" stroke="#d2d2d2" stroke-width="1"/><line x1="1447.50" y1="983.60" x2="1447.50" y2="1039.70" stroke="#d2d2d2" stroke-width="1"/><line x1="1770.50" y1="983.60" x2="1770.50" y2="1039.70" stroke="#d2d2d2" stroke-width="1"/><line x1="2093.50" y1="983.60" x2="2093.50" y2="1039.70" stroke="#d2d2d2" stroke-width="1"/><rect x="478.65" y="871.40" width="322.95" height="56.10" fill="#fff"/><rect x="1124.55" y="871.40" width="322.95" height="56.10" fill="#fff"/><rect x="1770.45" y="871.40" width="322.95" height="56.10" fill="#fff"/><line x1="478.50" y1="871.40" x2="478.50" y2="927.50" stroke="#d2d2d2" stroke-width="1"/><line x1="801.50" y1="871.40" x2="801.50" y2="927.50" stroke="#d2d2d2" stroke-width="1"/><line x1="1124.50" y1="871.40" x2="1124.50" y2="927.50" stroke="#d2d2d2" stroke-width="1"/><line x1="1447.50" y1="871.40" x2="1447.50" y2="927.50" stroke="#d2d2d2" stroke-width="1"/><line x1="1770.50" y1="871.40" x2="1770.50" y2="927.50" stroke="#d2d2d2" stroke-width="1"/><line x1="2093.50" y1="871.40" x2="2093.50" y2="927.50" stroke="#d2d2d2" stroke-width="1"/><line x1="144.70" y1="1320.50" x2="2416.35" y2="1320.50" stroke="#c0c0c0" stroke-width="1"/><line x1="144.70" y1="1264.50" x2="2416.35" y2="1264.50" stroke="#c0c0c0" stroke-width="1"/><line x1="144.70" y1="1208.50" x2="2416.35" y2="1208.50" stroke="#c0c0c0" stroke-width="1"/><line x1="144.70" y1="1151.50" x2="2416.35" y2="1151.50" stroke="#c0c0c0" stroke-width="1"/><line x1="144.70" y1="1095.50" x2="2416.35" y2="1095.50" stroke="#c0c0c0" stroke-width="1"/><line x1="144.70" y1="1039.50" x2="2416.35" y2="1039.50" stroke="#c0c0c0" stroke-width="1"/><line x1="144.70" y1="983.50" x2="2416.35" y2="983.50" stroke="#c0c0c0" stroke-width="1"/><line x1="144.70" y1="927.50" x2="2416.35" y2="927.50" stroke="#c0c0c0" stroke-width="1"/><line x1="144.70" y1="871.50" x2="2416.35" y2="871.50" stroke="#c0c0c0" stroke-width="1"/><line x1="144.70" y1="815.50" x2="2416.35" y2="815.50" stroke="#c0c0c0" stroke-width="1"/><path d="M155.70 1320.20V1297.8H156.26V1297.8H157.38V1303.4H158.50V1286.5H159.62V1297.8H160.75V1303.4H161.87V1303.4H162.99V1297.8H164.11V1297.8H165.23V1303.4H166.35V1297.8H167.47V1303.4H168.60V1275.3H169.72V1297.8H170.84V1297.8H171.96V1303.4H173.08V1303.4H174.20V1303.4H175.32V1303.4H176.45V1303.4H177.57V1280.9H178.69V1297.8H179.81V1297.8H180.93V1297.8H182.05V1297.8H183.17V1303.4H184.29V1297.8H185.42V1303.4H186.54V1303.4H187.66V1303.4H188.78V1303.4H189.90V1292.2H191.02V1303.4H192.14V1303.4H193.27V1303.4H194.39V1303.4H195.51V1303.4H196.63V1303.4H197.75V1303.4H198.87V1297.8H199.99V1297.8H201.11V1303.4H202.24V1269.7H203.36V1303.4H204.48V1303.4H205.60V1303.4H206.72V1297.8H207.84V1303.4H208.96V1297.8H210.09V1303.4H211.21V1303.4H212.33V1297.8H213.45V1303.4H214.57V1286.5H215.69V1303.4H216.81V1303.4H217.94V1303.4H219.06V1297.8H220.18V1303.4H221.30V1303.4H222.42V1303.4H223.54V1303.4H224.66V1303.4H225.78V1303.4H226.91V1303.4H228.03V1303.4H229.15V1269.7H230.27V1303.4H231.39V1303.4H232.51V1303.4H233.63V1297.8H234.76V1303.4H235.88V1303.4H237.00V1280.9H238.12V1309.0H239.24V1303.4H240.36V1303.4H241.48V1297.8H242.60V1297.8H243.73V1303.4H244.85V1303.4H245.97V1303.4H247.09V1303.4H248.21V1297.8H249.33V1303.4H250.45V1297.8H251.58V1297.8H252.70V1303.4H253.82V1303.4H254.94V1303.4H256.06V1303.4H257.18V1303.4H258.30V1303.4H259.43V1297.8H260.55V1280.9H261.67V1297.8H262.79V1297.8H263.91V1303.4H265.03V1303.4H266.15V1297.8H267.27V1286.5H268.40V1303.4H269.52V1303.4H270.64V1297.8H271.76V1297.8H272.88V1303.4H274.00V1303.4H275.12V1303.4H276.25V1303.4H277.37V1303.4H278.49V1303.4H279.61V1303.4H280.73V1303.4H281.85V1303.4H282.97V1303.4H284.10V1303.4H285.22V1303.4H286.34V1303.4H287.46V1297.8H288.58V1303.4H289.70V1303.4H290.82V1297.8H291.94V1303.4H293.07V1297.8H294.19V1303.4H295.31V1303.4H296.43V1303.4H297.55V1303.4H298.67V1275.3H299.79V1303.4H300.92V1297.8H302.04V1297.8H303.16V1309.0H304.28V1303.4H305.40V1297.8H306.52V1303.4H307.64V1303.4H308.76V1303.4H309.89V1303.4H311.01V1297.8H312.13V1297.8H313.25V1309.0H314.37V1297.8H315.49V1303.4H316.61V1297.8H317.74V1286.5H318.86V1303.4H319.98V1303.4H321.10V1303.4H322.22V1303.4H323.34V1297.8H324.46V1303.4H325.59V1297.8H326.71V1303.4H327.83V1303.4H328.95V1303.4H330.07V1309.0H331.19V1297.8H332.31V1303.4H333.43V1303.4H334.56V1303.4H335.68V1303.4H336.80V1303.4H337.92V1303.4H339.04V1297.8H340.16V1297.8H341.28V1303.4H342.41V1303.4H343.53V1297.8H344.65V1303.4H345.77V1303.4H346.89V1303.4H348.01V1303.4H349.13V1303.4H350.25V1297.8H351.38V1303.4H352.50V1309.0H353.62V1303.4H354.74V1303.4H355.86V1309.0H356.98V1303.4H358.10V1286.5H359.23V1297.8H360.35V1297.8H361.47V1297.8H362.59V1303.4H363.71V1303.4H364.83V1303.4H365.95V1303.4H367.08V1303.4H368.20V1303.4H369.32V1286.5H370.44V1303.4H371.56V1303.4H372.68V1303.4H373.80V1303.4H374.92V1297.8H376.05V1303.4H377.17V1309.0H378.29V1303.4H379.41V1303.4H380.53V1303.4H381.65V1303.4H382.77V1303.4H383.90V1303.4H385.02V1297.8H386.14V1297.8H387.26V1297.8H388.38V1303.4H389.50V1303.4H390.62V1297.8H391.75V1303.4H392.87V1303.4H393.99V1303.4H395.11V1309.0H396.23V1303.4H397.35V1297.8H398.47V1286.5H399.59V1303.4H400.72V1303.4H401.84V1303.4H402.96V1303.4H404.08V1303.4H405.20V1297.8H406.32V1297.8H407.44V1297.8H408.57V1297.8H409.69V1303.4H410.81V1297.8H411.93V1303.4H413.05V1297.8H414.17V1303.4H415.29V1309.0H416.41V1303.4H417.54V1303.4H418.66V1303.4H419.78V1303.4H420.90V1303.4H422.02V1303.4H423.14V1303.4H424.26V1303.4H425.39V1280.9H426.51V1303.4H427.63V1303.4H428.75V1303.4H429.87V1297.8H430.99V1297.8H432.11V1303.4H433.24V1297.8H434.36V1286.5H435.48V1303.4H436.60V1303.4H437.72V1303.4H438.84V1303.4H439.96V1275.3H441.08V1297.8H442.21V1303.4H443.33V1303.4H444.45V1303.4H445.57V1303.4H446.69V1303.4H447.81V1303.4H448.93V1303.4H450.06V1303.4H451.18V1303.4H452.30V1303.4H453.42V1303.4H454.54V1303.4H455.66V1303.4H456.78V1303.4H457.90V1303.4H459.03V1303.4H460.15V1303.4H461.27V1297.8H462.39V1303.4H463.51V1303.4H464.63V1303.4H465.75V1297.8H466.88V1297.8H468.00V1303.4H469.12V1275.3H470.24V1303.4H471.36V1297.8H472.48V1297.8H473.60V1297.8H474.73V1303.4H475.85V1303.4H476.97V1303.4H478.09V1303.4H479.21V1297.8H480.33V1297.8H481.45V1303.4H482.57V1303.4H483.70V1297.8H484.82V1303.4H485.94V1297.8H487.06V1303.4H488.18V1297.8H489.30V1303.4H490.42V1303.4H491.55V1303.4H492.67V1303.4H493.79V1309.0H494.91V1297.8H496.03V1303.4H497.15V1309.0H498.27V1303.4H499.40V1303.4H500.52V1303.4H501.64V1303.4H502.76V1297.8H503.88V1303.4H505.00V1297.8H506.12V1303.4H507.24V1297.8H508.37V1303.4H509.49V1269.7H510.61V1280.9H511.73V1297.8H512.85V1297.8H513.97V1303.4H515.09V1303.4H516.22V1303.4H517.34V1297.8H518.46V1297.8H519.58V1303.4H520.70V1303.4H521.82V1303.4H522.94V1297.8H524.06V1280.9H525.19V1303.4H526.31V1292.2H527.43V1303.4H528.55V1303.4H529.67V1275.3H530.79V1286.5H531.91V1303.4H533.04V1309.0H534.16V1303.4H535.28V1303.4H536.40V1297.8H537.52V1297.8H538.64V1303.4H539.76V1297.8H540.89V1297.8H542.01V1297.8H543.13V1275.3H544.25V1303.4H545.37V1303.4H546.49V1303.4H547.61V1297.8H548.73V1303.4H549.86V1303.4H550.98V1297.8H552.10V1303.4H553.22V1303.4H554.34V1292.2H555.46V1303.4H556.58V1303.4H557.71V1297.8H558.83V1303.4H559.95V1303.4H561.07V1297.8H562.19V1303.4H563.31V1303.4H564.43V1303.4H565.55V1303.4H566.68V1303.4H567.80V1303.4H568.92V1303.4H570.04V1303.4H571.16V1309.0H572.28V1303.4H573.40V1303.4H574.53V1303.4H575.65V1303.4H576.77V1309.0H577.89V1280.9H579.01V1269.7H580.13V1303.4H581.25V1286.5H582.38V1303.4H583.50V1303.4H584.62V1297.8H585.74V1297.8H586.86V1297.8H587.98V1303.4H589.10V1297.8H590.22V1303.4H591.35V1297.8H592.47V1303.4H593.59V1303.4H594.71V1303.4H595.83V1297.8H596.95V1303.4H598.07V1297.8H599.20V1309.0H600.32V1286.5H601.44V1269.7H602.56V1303.4H603.68V1297.8H604.80V1303.4H605.92V1269.7H607.05V1303.4H608.17V1297.8H609.29V1303.4H610.41V1303.4H611.53V1297.8H612.65V1303.4H613.77V1286.5H614.89V1303.4H616.02V1297.8H617.14V1303.4H618.26V1303.4H619.38V1303.4H620.50V1303.4H621.62V1303.4H622.74V1303.4H623.87V1297.8H624.99V1303.4H626.11V1297.8H627.23V1303.4H628.35V1303.4H629.47V1303.4H630.59V1303.4H631.71V1303.4H632.84V1303.4H633.96V1303.4H635.08V1303.4H636.20V1303.4H637.32V1303.4H638.44V1275.3H639.56V1303.4H640.69V1303.4H641.81V1303.4H642.93V1303.4H644.05V1297.8H645.17V1292.2H646.29V1303.4H647.41V1303.4H648.54V1303.4H649.66V1292.2H650.78V1303.4H651.90V1303.4H653.02V1303.4H654.14V1286.5H655.26V1303.4H656.38V1303.4H657.51V1303.4H658.63V1303.4H659.75V1280.9H660.87V1297.8H661.99V1269.7H663.11V1297.8H664.23V1303.4H665.36V1297.8H666.48V1303.4H667.60V1303.4H668.72V1303.4H669.84V1269.7H670.96V1303.4H672.08V1303.4H673.20V1303.4H674.33V1280.9H675.45V1309.0H676.57V1303.4H677.69V1303.4H678.81V1303.4H679.93V1297.8H681.05V1303.4H682.18V1303.4H683.30V1303.4H684.42V1297.8H685.54V1297.8H686.66V1303.4H687.78V1303.4H688.90V1297.8H690.03V1303.4H691.15V1303.4H692.27V1303.4H693.39V1303.4H694.51V1297.8H695.63V1297.8H696.75V1303.4H697.87V1297.8H699.00V1286.5H700.12V1303.4H701.24V1303.4H702.36V1297.8H703.48V1297.8H704.60V1303.4H705.72V1297.8H706.85V1303.4H707.97V1297.8H709.09V1303.4H710.21V1303.4H711.33V1297.8H712.45V1303.4H713.57V1303.4H714.70V1303.4H715.82V1303.4H716.94V1297.8H718.06V1303.4H719.18V1303.4H720.30V1292.2H721.42V1303.4H722.54V1303.4H723.67V1303.4H724.79V1303.4H725.91V1303.4H727.03V1303.4H728.15V1297.8H729.27V1309.0H730.39V1297.8H731.52V1309.0H732.64V1303.4H733.76V1303.4H734.88V1297.8H736.00V1269.7H737.12V1297.8H738.24V1286.5H739.36V1303.4H740.49V1303.4H741.61V1303.4H742.73V1303.4H743.85V1297.8H744.97V1286.5H746.09V1269.7H747.21V1303.4H748.34V1297.8H749.46V1303.4H750.58V1303.4H751.70V1297.8H752.82V1303.4H753.94V1303.4H755.06V1303.4H756.19V1286.5H757.31V1303.4H758.43V1303.4H759.55V1303.4H760.67V1303.4H761.79V1286.5H762.91V1303.4H764.03V1303.4H765.16V1303.4H766.28V1297.8H767.40V1286.5H768.52V1297.8H769.64V1303.4H770.76V1309.0H771.88V1297.8H773.01V1303.4H774.13V1303.4H775.25V1297.8H776.37V1303.4H777.49V1297.8H778.61V1303.4H779.73V1303.4H780.85V1297.8H781.98V1297.8H783.10V1297.8H784.22V1303.4H785.34V1303.4H786.46V1297.8H787.58V1303.4H788.70V1303.4H789.83V1303.4H790.95V1297.8H792.07V1297.8H793.19V1297.8H794.31V1309.0H795.43V1297.8H796.55V1297.8H797.68V1297.8H798.80V1303.4H799.92V1303.4H801.04V1303.4H802.16V1303.4H803.28V1303.4H804.40V1303.4H805.52V1303.4H806.65V1309.0H807.77V1269.7H808.89V1303.4H810.01V1303.4H811.13V1303.4H812.25V1303.4H813.37V1303.4H814.50V1303.4H815.62V1297.8H816.74V1303.4H817.86V1303.4H818.98V1303.4H820.10V1303.4H821.22V1297.8H822.35V1303.4H823.47V1303.4H824.59V1297.8H825.71V1303.4H826.83V1303.4H827.95V1303.4H829.07V1303.4H830.19V1303.4H831.32V1286.5H832.44V1303.4H833.56V1303.4H834.68V1297.8H835.80V1297.8H836.92V1297.8H838.04V1303.4H839.17V1303.4H840.29V1303.4H841.41V1303.4H842.53V1303.4H843.65V1303.4H844.77V1303.4H845.89V1303.4H847.01V1280.9H848.14V1297.8H849.26V1303.4H850.38V1303.4H851.50V1297.8H852.62V1297.8H853.74V1297.8H854.86V1303.4H855.99V1303.4H857.11V1297.8H858.23V1286.5H859.35V1303.4H860.47V1297.8H861.59V1297.8H862.71V1303.4H863.84V1286.5H864.96V1297.8H866.08V1303.4H867.20V1303.4H868.32V1303.4H869.44V1303.4H870.56V1303.4H871.68V1297.8H872.81V1297.8H873.93V1303.4H875.05V1303.4H876.17V1297.8H877.29V1280.9H878.41V1303.4H879.53V1303.4H880.66V1275.3H881.78V1320.20ZM1029.80 1320.20V1303.4H1030.92V1297.8H1032.04V1297.8H1033.16V1297.8H1034.28V1303.4H1035.40V1297.8H1036.52V1269.7H1037.65V1303.4H1038.77V1303.4H1039.89V1297.8H1041.01V1303.4H1042.13V1303.4H1043.25V1303.4H1044.37V1297.8H1045.49V1303.4H1046.62V1303.4H1047.74V1303.4H1048.86V1303.4H1049.98V1269.7H1051.10V1297.8H1052.22V1275.3H1053.34V1303.4H1054.47V1303.4H1055.59V1303.4H1056.71V1303.4H1057.83V1303.4H1058.95V1303.4H1060.07V1297.8H1061.19V1303.4H1062.31V1303.4H1063.44V1297.8H1064.56V1303.4H1065.68V1303.4H1066.80V1297.8H1067.92V1303.4H1069.04V1297.8H1070.16V1297.8H1071.29V1297.8H1072.41V1303.4H1073.53V1303.4H1074.65V1297.8H1075.77V1292.2H1076.89V1303.4H1078.01V1303.4H1079.14V1303.4H1080.26V1292.2H1081.38V1303.4H1082.50V1303.4H1083.62V1286.5H1084.74V1303.4H1085.86V1303.4H1086.98V1297.8H1088.11V1303.4H1089.23V1303.4H1090.35V1303.4H1091.47V1297.8H1092.59V1303.4H1093.71V1303.4H1094.83V1303.4H1095.96V1275.3H1097.08V1303.4H1098.20V1303.4H1099.32V1292.2H1100.44V1303.4H1101.56V1303.4H1102.68V1303.4H1103.80V1303.4H1104.93V1303.4H1106.05V1297.8H1107.17V1297.8H1108.29V1297.8H1109.41V1303.4H1110.53V1303.4H1111.65V1303.4H1112.78V1297.8H1113.90V1280.9H1115.02V1303.4H1116.14V1303.4H1117.26V1297.8H1118.38V1303.4H1119.50V1303.4H1120.63V1303.4H1121.75V1297.8H1122.87V1297.8H1123.99V1303.4H1125.11V1320.20ZM1137.45 1320.20V1297.8H1138.57V1303.4H1139.69V1303.4H1140.81V1303.4H1141.93V1303.4H1143.05V1303.4H1144.17V1303.4H1145.30V1303.4H1146.42V1297.8H1147.54V1303.4H1148.66V1303.4H1149.78V1286.5H1150.90V1297.8H1152.02V1309.0H1153.14V1297.8H1154.27V1303.4H1155.39V1303.4H1156.51V1297.8H1157.63V1303.4H1158.75V1303.4H1159.87V1303.4H1160.99V1303.4H1162.12V1297.8H1163.24V1303.4H1164.36V1303.4H1165.48V1303.4H1166.60V1303.4H1167.72V1303.4H1168.84V1297.8H1169.96V1297.8H1171.09V1303.4H1172.21V1303.4H1173.33V1303.4H1174.45V1297.8H1175.57V1280.9H1176.69V1303.4H1177.81V1303.4H1178.94V1303.4H1180.06V1303.4H1181.18V1303.4H1182.30V1303.4H1183.42V1303.4H1184.54V1292.2H1185.66V1303.4H1186.79V1297.8H1187.91V1303.4H1189.03V1303.4H1190.15V1280.9H1191.27V1292.2H1192.39V1303.4H1193.51V1303.4H1194.63V1286.5H1195.76V1303.4H1196.88V1303.4H1198.00V1303.4H1199.12V1286.5H1200.24V1303.4H1201.36V1303.4H1202.48V1303.4H1203.61V1297.8H1204.73V1320.20ZM1352.75 1320.20V1297.8H1353.87V1303.4H1354.99V1297.8H1356.11V1303.4H1357.23V1303.4H1358.35V1297.8H1359.47V1297.8H1360.60V1303.4H1361.72V1297.8H1362.84V1303.4H1363.96V1303.4H1365.08V1303.4H1366.20V1303.4H1367.32V1303.4H1368.44V1303.4H1369.57V1303.4H1370.69V1303.4H1371.81V1303.4H1372.93V1303.4H1374.05V1292.2H1375.17V1303.4H1376.29V1303.4H1377.42V1303.4H1378.54V1297.8H1379.66V1297.8H1380.78V1303.4H1381.90V1280.9H1383.02V1297.8H1384.14V1286.5H1385.26V1303.4H1386.39V1297.8H1387.51V1303.4H1388.63V1303.4H1389.75V1280.9H1390.87V1303.4H1391.99V1303.4H1393.11V1303.4H1394.24V1303.4H1395.36V1275.3H1396.48V1303.4H1397.60V1297.8H1398.72V1303.4H1399.84V1303.4H1400.96V1303.4H1402.09V1303.4H1403.21V1303.4H1404.33V1303.4H1405.45V1303.4H1406.57V1297.8H1407.69V1297.8H1408.81V1286.5H1409.93V1303.4H1411.06V1303.4H1412.18V1297.8H1413.30V1297.8H1414.42V1297.8H1415.54V1303.4H1416.66V1297.8H1417.78V1297.8H1418.91V1303.4H1420.03V1269.7H1421.15V1303.4H1422.27V1292.2H1423.39V1303.4H1424.51V1303.4H1425.63V1303.4H1426.75V1303.4H1427.88V1297.8H1429.00V1303.4H1430.12V1303.4H1431.24V1286.5H1432.36V1303.4H1433.48V1309.0H1434.60V1303.4H1435.73V1303.4H1436.85V1297.8H1437.97V1303.4H1439.09V1297.8H1440.21V1303.4H1441.33V1297.8H1442.45V1275.3H1443.58V1297.8H1444.70V1303.4H1445.82V1292.2H1446.94V1303.4H1448.06V1303.4H1449.18V1303.4H1450.30V1297.8H1451.42V1303.4H1452.55V1309.0H1453.67V1303.4H1454.79V1297.8H1455.91V1303.4H1457.03V1297.8H1458.15V1297.8H1459.27V1303.4H1460.40V1303.4H1461.52V1297.8H1462.64V1303.4H1463.76V1286.5H1464.88V1303.4H1466.00V1303.4H1467.12V1309.0H1468.25V1303.4H1469.37V1303.4H1470.49V1303.4H1471.61V1297.8H1472.73V1303.4H1473.85V1275.3H1474.97V1297.8H1476.09V1303.4H1477.22V1303.4H1478.34V1297.8H1479.46V1303.4H1480.58V1303.4H1481.70V1303.4H1482.82V1297.8H1483.94V1303.4H1485.07V1303.4H1486.19V1303.4H1487.31V1275.3H1488.43V1297.8H1489.55V1297.8H1490.67V1303.4H1491.79V1303.4H1492.91V1303.4H1494.04V1297.8H1495.16V1303.4H1496.28V1303.4H1497.40V1303.4H1498.52V1297.8H1499.64V1303.4H1500.76V1303.4H1501.89V1297.8H1503.01V1297.8H1504.13V1297.8H1505.25V1303.4H1506.37V1303.4H1507.49V1297.8H1508.61V1297.8H1509.74V1297.8H1510.86V1297.8H1511.98V1303.4H1513.10V1297.8H1514.22V1297.8H1515.34V1297.8H1516.46V1303.4H1517.58V1303.4H1518.71V1297.8H1519.83V1303.4H1520.95V1297.8H1522.07V1303.4H1523.19V1303.4H1524.31V1303.4H1525.43V1303.4H1526.56V1303.4H1527.68V1320.20ZM1675.70 1320.20V1297.8H1676.82V1297.8H1677.94V1297.8H1679.06V1303.4H1680.18V1309.0H1681.30V1297.8H1682.42V1303.4H1683.55V1303.4H1684.67V1297.8H1685.79V1303.4H1686.91V1303.4H1688.03V1303.4H1689.15V1303.4H1690.27V1303.4H1691.39V1303.4H1692.52V1303.4H1693.64V1297.8H1694.76V1303.4H1695.88V1303.4H1697.00V1303.4H1698.12V1303.4H1699.24V1303.4H1700.37V1303.4H1701.49V1297.8H1702.61V1297.8H1703.73V1297.8H1704.85V1303.4H1705.97V1280.9H1707.09V1303.4H1708.21V1303.4H1709.34V1297.8H1710.46V1297.8H1711.58V1303.4H1712.70V1303.4H1713.82V1297.8H1714.94V1297.8H1716.06V1303.4H1717.19V1303.4H1718.31V1297.8H1719.43V1303.4H1720.55V1303.4H1721.67V1303.4H1722.79V1303.4H1723.91V1297.8H1725.04V1303.4H1726.16V1303.4H1727.28V1292.2H1728.40V1303.4H1729.52V1303.4H1730.64V1309.0H1731.76V1303.4H1732.88V1303.4H1734.01V1303.4H1735.13V1303.4H1736.25V1286.5H1737.37V1303.4H1738.49V1309.0H1739.61V1303.4H1740.73V1303.4H1741.86V1303.4H1742.98V1303.4H1744.10V1303.4H1745.22V1297.8H1746.34V1303.4H1747.46V1303.4H1748.58V1303.4H1749.70V1303.4H1750.83V1297.8H1751.95V1303.4H1753.07V1303.4H1754.19V1303.4H1755.31V1297.8H1756.43V1303.4H1757.55V1303.4H1758.68V1303.4H1759.80V1303.4H1760.92V1309.0H1762.04V1297.8H1763.16V1297.8H1764.28V1303.4H1765.40V1303.4H1766.53V1303.4H1767.65V1286.5H1768.77V1303.4H1769.89V1303.4H1771.01V1269.7H1772.13V1297.8H1773.25V1280.9H1774.37V1303.4H1775.50V1303.4H1776.62V1303.4H1777.74V1303.4H1778.86V1303.4H1779.98V1303.4H1781.10V1303.4H1782.22V1303.4H1783.35V1303.4H1784.47V1303.4H1785.59V1297.8H1786.71V1303.4H1787.83V1303.4H1788.95V1303.4H1790.07V1297.8H1791.20V1297.8H1792.32V1286.5H1793.44V1303.4H1794.56V1303.4H1795.68V1303.4H1796.80V1303.4H1797.92V1303.4H1799.04V1303.4H1800.17V1297.8H1801.29V1297.8H1802.41V1303.4H1803.53V1297.8H1804.65V1303.4H1805.77V1303.4H1806.89V1303.4H1808.02V1275.3H1809.14V1303.4H1810.26V1303.4H1811.38V1303.4H1812.50V1303.4H1813.62V1303.4H1814.74V1303.4H1815.86V1286.5H1816.99V1303.4H1818.11V1303.4H1819.23V1303.4H1820.35V1297.8H1821.47V1303.4H1822.59V1303.4H1823.71V1280.9H1824.84V1297.8H1825.96V1297.8H1827.08V1292.2H1828.20V1286.5H1829.32V1303.4H1830.44V1303.4H1831.56V1297.8H1832.69V1297.8H1833.81V1303.4H1834.93V1297.8H1836.05V1303.4H1837.17V1303.4H1838.29V1303.4H1839.41V1303.4H1840.53V1303.4H1841.66V1303.4H1842.78V1303.4H1843.90V1297.8H1845.02V1303.4H1846.14V1297.8H1847.26V1303.4H1848.38V1303.4H1849.51V1303.4H1850.63V1320.20ZM1998.65 1320.20V1303.4H1999.77V1297.8H2000.89V1297.8H2002.01V1297.8H2003.13V1297.8H2004.25V1303.4H2005.37V1303.4H2006.50V1297.8H2007.62V1303.4H2008.74V1303.4H2009.86V1297.8H2010.98V1303.4H2012.10V1297.8H2013.22V1303.4H2014.34V1303.4H2015.47V1286.5H2016.59V1303.4H2017.71V1303.4H2018.83V1286.5H2019.95V1303.4H2021.07V1303.4H2022.19V1303.4H2023.32V1280.9H2024.44V1297.8H2025.56V1275.3H2026.68V1303.4H2027.80V1297.8H2028.92V1303.4H2030.04V1303.4H2031.16V1297.8H2032.29V1297.8H2033.41V1297.8H2034.53V1297.8H2035.65V1303.4H2036.77V1297.8H2037.89V1297.8H2039.01V1297.8H2040.14V1303.4H2041.26V1275.3H2042.38V1303.4H2043.50V1297.8H2044.62V1303.4H2045.74V1275.3H2046.86V1303.4H2047.99V1303.4H2049.11V1297.8H2050.23V1303.4H2051.35V1297.8H2052.47V1303.4H2053.59V1303.4H2054.71V1303.4H2055.83V1303.4H2056.96V1309.0H2058.08V1303.4H2059.20V1303.4H2060.32V1303.4H2061.44V1297.8H2062.56V1297.8H2063.68V1280.9H2064.81V1303.4H2065.93V1297.8H2067.05V1303.4H2068.17V1297.8H2069.29V1303.4H2070.41V1297.8H2071.53V1297.8H2072.65V1303.4H2073.78V1309.0H2074.90V1297.8H2076.02V1303.4H2077.14V1297.8H2078.26V1303.4H2079.38V1297.8H2080.50V1303.4H2081.63V1275.3H2082.75V1303.4H2083.87V1303.4H2084.99V1297.8H2086.11V1303.4H2087.23V1303.4H2088.35V1303.4H2089.48V1297.8H2090.60V1297.8H2091.72V1297.8H2092.84V1303.4H2093.96V1309.0H2095.08V1303.4H2096.20V1303.4H2097.32V1309.0H2098.45V1303.4H2099.57V1303.4H2100.69V1309.0H2101.81V1303.4H2102.93V1309.0H2104.05V1303.4H2105.17V1309.0H2106.30V1297.8H2107.42V1309.0H2108.54V1303.4H2109.66V1309.0H2110.78V1309.0H2111.90V1303.4H2113.02V1303.4H2114.15V1297.8H2115.27V1286.5H2116.39V1309.0H2117.51V1297.8H2118.63V1314.6H2119.75V1303.4H2120.87V1303.4H2121.99V1309.0H2123.12V1303.4H2124.24V1303.4H2125.36V1297.8H2126.48V1309.0H2127.60V1303.4H2128.72V1309.0H2129.84V1309.0H2130.97V1297.8H2132.09V1309.0H2133.21V1303.4H2134.33V1309.0H2135.45V1303.4H2136.57V1303.4H2137.69V1303.4H2138.81V1286.5H2139.94V1303.4H2141.06V1303.4H2142.18V1309.0H2143.30V1303.4H2144.42V1303.4H2145.54V1309.0H2146.66V1303.4H2147.79V1309.0H2148.91V1309.0H2150.03V1303.4H2151.15V1303.4H2152.27V1303.4H2153.39V1309.0H2154.51V1303.4H2155.64V1309.0H2156.76V1303.4H2157.88V1303.4H2159.00V1309.0H2160.12V1303.4H2161.24V1275.3H2162.36V1297.8H2163.48V1297.8H2164.61V1303.4H2165.73V1297.8H2166.85V1297.8H2167.97V1297.8H2169.09V1297.8H2170.21V1297.8H2171.33V1303.4H2172.46V1297.8H2173.58V1320.20Z" fill="#a0eec4"/><path d="M881.78 1320.20V1292.2H882.90V1292.2H884.02V1292.2H885.14V1297.8H886.26V1303.4H887.38V1303.4H888.50V1297.8H889.63V1297.8H890.75V1303.4H891.87V1303.4H892.99V1292.2H894.11V1196.8H895.23V1219.2H896.35V1185.6H897.48V1118.2H898.60V1208.0H899.72V1151.9H900.84V1202.4H901.96V1135.1H903.08V1084.6H904.20V1151.9H905.33V1163.1H906.45V1219.2H907.57V1252.9H908.69V1252.9H909.81V1264.1H910.93V1196.8H912.05V1252.9H913.17V1011.7H914.30V899.5H915.42V1062.1H916.54V966.8H917.66V1095.8H918.78V1264.1H919.90V1258.5H921.02V1208.0H922.15V1241.7H923.27V1236.0H924.39V1269.7H925.51V1275.3H926.63V1252.9H927.75V1230.4H928.87V1219.2H930.00V1230.4H931.12V1275.3H932.24V1275.3H933.36V1224.8H934.48V1174.3H935.60V1135.1H936.72V1191.2H937.84V1084.6H938.97V1269.7H940.09V1107.0H941.21V1017.3H942.33V1157.5H943.45V1073.4H944.57V1151.9H945.69V1185.6H946.82V1292.2H947.94V1269.7H949.06V1280.9H950.18V1269.7H951.30V1286.5H952.42V1280.9H953.54V1264.1H954.66V1286.5H955.79V1269.7H956.91V1264.1H958.03V1280.9H959.15V1252.9H960.27V1252.9H961.39V1213.6H962.51V1264.1H963.64V1241.7H964.76V1269.7H965.88V1252.9H967.00V1280.9H968.12V1230.4H969.24V1264.1H970.36V1269.7H971.49V1252.9H972.61V1264.1H973.73V1275.3H974.85V1269.7H975.97V1286.5H977.09V1286.5H978.21V1280.9H979.33V1286.5H980.46V1236.0H981.58V1151.9H982.70V1073.4H983.82V1112.6H984.94V1280.9H986.06V1286.5H987.18V1280.9H988.31V1275.3H989.43V1297.8H990.55V1275.3H991.67V1286.5H992.79V1275.3H993.91V1286.5H995.03V1286.5H996.15V1286.5H997.28V1292.2H998.40V1264.1H999.52V1208.0H1000.64V1269.7H1001.76V1269.7H1002.88V1292.2H1004.00V1292.2H1005.13V1208.0H1006.25V1247.3H1007.37V1252.9H1008.49V1269.7H1009.61V1264.1H1010.73V1286.5H1011.85V1275.3H1012.98V1258.5H1014.10V1258.5H1015.22V1236.0H1016.34V1280.9H1017.46V1252.9H1018.58V1241.7H1019.70V1286.5H1020.82V1275.3H1021.95V1275.3H1023.07V1275.3H1024.19V1292.2H1025.31V1275.3H1026.43V1286.5H1027.55V1292.2H1028.67V1297.8H1029.80V1320.20ZM1204.73 1320.20V1303.4H1205.85V1297.8H1206.97V1292.2H1208.09V1297.8H1209.21V1292.2H1210.33V1292.2H1211.45V1275.3H1212.58V1269.7H1213.70V1269.7H1214.82V1151.9H1215.94V1191.2H1217.06V1219.2H1218.18V1095.8H1219.30V1045.3H1220.43V1135.1H1221.55V1056.5H1222.67V1135.1H1223.79V1213.6H1224.91V1230.4H1226.03V1157.5H1227.15V1006.0H1228.28V1185.6H1229.40V1039.7H1230.52V1135.1H1231.64V1050.9H1232.76V1067.8H1233.88V1191.2H1235.00V1230.4H1236.12V1280.9H1237.25V1280.9H1238.37V1247.3H1239.49V1286.5H1240.61V1297.8H1241.73V1286.5H1242.85V1286.5H1243.97V1269.7H1245.10V1264.1H1246.22V1269.7H1247.34V1252.9H1248.46V1034.1H1249.58V1146.3H1250.70V1202.4H1251.82V1107.0H1252.95V1006.0H1254.07V1112.6H1255.19V1079.0H1256.31V1017.3H1257.43V1095.8H1258.55V1180.0H1259.67V1252.9H1260.79V1280.9H1261.92V1269.7H1263.04V1275.3H1264.16V1286.5H1265.28V1264.1H1266.40V1011.7H1267.52V1000.4H1268.64V1252.9H1269.77V1252.9H1270.89V1236.0H1272.01V1185.6H1273.13V1146.3H1274.25V1185.6H1275.37V1168.7H1276.49V1252.9H1277.61V1252.9H1278.74V1230.4H1279.86V1247.3H1280.98V1230.4H1282.10V1264.1H1283.22V1252.9H1284.34V1252.9H1285.46V1286.5H1286.59V1135.1H1287.71V1168.7H1288.83V1236.0H1289.95V1258.5H1291.07V1280.9H1292.19V1252.9H1293.31V1275.3H1294.44V1129.5H1295.56V1067.8H1296.68V1269.7H1297.80V1208.0H1298.92V1252.9H1300.04V1280.9H1301.16V1252.9H1302.28V1112.6H1303.41V1247.3H1304.53V1056.5H1305.65V1101.4H1306.77V1247.3H1307.89V1219.2H1309.01V1196.8H1310.13V1286.5H1311.26V1286.5H1312.38V1269.7H1313.50V1286.5H1314.62V1208.0H1315.74V1107.0H1316.86V978.0H1317.98V1151.9H1319.10V1056.5H1320.23V955.6H1321.35V1135.1H1322.47V1292.2H1323.59V1269.7H1324.71V1292.2H1325.83V1252.9H1326.95V1247.3H1328.08V1168.7H1329.20V1258.5H1330.32V1258.5H1331.44V1213.6H1332.56V1252.9H1333.68V1264.1H1334.80V1269.7H1335.93V1224.8H1337.05V1258.5H1338.17V1252.9H1339.29V1213.6H1340.41V1112.6H1341.53V1123.9H1342.65V1196.8H1343.77V1264.1H1344.90V1275.3H1346.02V1258.5H1347.14V1286.5H1348.26V1286.5H1349.38V1280.9H1350.50V1269.7H1351.62V1275.3H1352.75V1320.20ZM1527.68 1320.20V1297.8H1528.80V1280.9H1529.92V1286.5H1531.04V1297.8H1532.16V1292.2H1533.28V1280.9H1534.40V1275.3H1535.53V1264.1H1536.65V1264.1H1537.77V1123.9H1538.89V1241.7H1540.01V1151.9H1541.13V1028.5H1542.25V944.3H1543.38V1028.5H1544.50V994.8H1545.62V1101.4H1546.74V1202.4H1547.86V1129.5H1548.98V877.0H1550.10V944.3H1551.23V1045.3H1552.35V1185.6H1553.47V994.8H1554.59V949.9H1555.71V1079.0H1556.83V966.8H1557.95V1028.5H1559.07V1135.1H1560.20V1073.4H1561.32V1084.6H1562.44V1101.4H1563.56V1028.5H1564.68V1056.5H1565.80V966.8H1566.92V1157.5H1568.05V1090.2H1569.17V882.6H1570.29V1011.7H1571.41V949.9H1572.53V865.8H1573.65V1095.8H1574.77V989.2H1575.90V1140.7H1577.02V1073.4H1578.14V1028.5H1579.26V1084.6H1580.38V1017.3H1581.50V1146.3H1582.62V1174.3H1583.74V1000.4H1584.87V1084.6H1585.99V1135.1H1587.11V1056.5H1588.23V1107.0H1589.35V1006.0H1590.47V1062.1H1591.59V1208.0H1592.72V888.2H1593.84V1135.1H1594.96V983.6H1596.08V1112.6H1597.20V1056.5H1598.32V1129.5H1599.44V1157.5H1600.56V1213.6H1601.69V1236.0H1602.81V1275.3H1603.93V1252.9H1605.05V1269.7H1606.17V1269.7H1607.29V1286.5H1608.41V1275.3H1609.54V1280.9H1610.66V1269.7H1611.78V1292.2H1612.90V1280.9H1614.02V1258.5H1615.14V1264.1H1616.26V1230.4H1617.39V1174.3H1618.51V1123.9H1619.63V1073.4H1620.75V1129.5H1621.87V1168.7H1622.99V1202.4H1624.11V1258.5H1625.23V1034.1H1626.36V1107.0H1627.48V1067.8H1628.60V1112.6H1629.72V1258.5H1630.84V1146.3H1631.96V1084.6H1633.08V1196.8H1634.21V1213.6H1635.33V1219.2H1636.45V1258.5H1637.57V1224.8H1638.69V1028.5H1639.81V1079.0H1640.93V1269.7H1642.05V1224.8H1643.18V1224.8H1644.30V1258.5H1645.42V1275.3H1646.54V1269.7H1647.66V1079.0H1648.78V1163.1H1649.90V1252.9H1651.03V1213.6H1652.15V1236.0H1653.27V1275.3H1654.39V1258.5H1655.51V1241.7H1656.63V1269.7H1657.75V1252.9H1658.88V1269.7H1660.00V1297.8H1661.12V1292.2H1662.24V1303.4H1663.36V1292.2H1664.48V1297.8H1665.60V1292.2H1666.72V1292.2H1667.85V1303.4H1668.97V1297.8H1670.09V1303.4H1671.21V1286.5H1672.33V1297.8H1673.45V1286.5H1674.57V1303.4H1675.70V1320.20ZM1850.63 1320.20V1286.5H1851.75V1264.1H1852.87V1286.5H1853.99V1275.3H1855.11V1252.9H1856.23V1191.2H1857.35V1140.7H1858.48V1039.7H1859.60V1123.9H1860.72V1079.0H1861.84V1022.9H1862.96V1073.4H1864.08V921.9H1865.20V966.8H1866.33V1101.4H1867.45V1135.1H1868.57V1191.2H1869.69V1174.3H1870.81V1196.8H1871.93V1022.9H1873.05V944.3H1874.18V1107.0H1875.30V994.8H1876.42V1056.5H1877.54V1163.1H1878.66V1028.5H1879.78V1118.2H1880.90V1090.2H1882.02V1146.3H1883.15V1045.3H1884.27V1039.7H1885.39V1101.4H1886.51V1213.6H1887.63V1269.7H1888.75V1264.1H1889.87V1269.7H1891.00V1213.6H1892.12V1101.4H1893.24V1034.1H1894.36V1140.7H1895.48V983.6H1896.60V1056.5H1897.72V1258.5H1898.85V1258.5H1899.97V1258.5H1901.09V1224.8H1902.21V1196.8H1903.33V1191.2H1904.45V1050.9H1905.57V1050.9H1906.69V1191.2H1907.82V1028.5H1908.94V1118.2H1910.06V1084.6H1911.18V1247.3H1912.30V1135.1H1913.42V1213.6H1914.54V1084.6H1915.67V1219.2H1916.79V1247.3H1917.91V1196.8H1919.03V1236.0H1920.15V1280.9H1921.27V1236.0H1922.39V1264.1H1923.51V1202.4H1924.64V1224.8H1925.76V1280.9H1926.88V1275.3H1928.00V1269.7H1929.12V1269.7H1930.24V1280.9H1931.36V1174.3H1932.49V1269.7H1933.61V1224.8H1934.73V1258.5H1935.85V1286.5H1936.97V1269.7H1938.09V1241.7H1939.21V1264.1H1940.34V1286.5H1941.46V1286.5H1942.58V1297.8H1943.70V1286.5H1944.82V1202.4H1945.94V1168.7H1947.06V1107.0H1948.18V1180.0H1949.31V1146.3H1950.43V1062.1H1951.55V1174.3H1952.67V1230.4H1953.79V1107.0H1954.91V1000.4H1956.03V1118.2H1957.16V1107.0H1958.28V1151.9H1959.40V1286.5H1960.52V1280.9H1961.64V1129.5H1962.76V1017.3H1963.88V1292.2H1965.00V1292.2H1966.13V1292.2H1967.25V1292.2H1968.37V1163.1H1969.49V1123.9H1970.61V1163.1H1971.73V1196.8H1972.85V1230.4H1973.98V1280.9H1975.10V1258.5H1976.22V1269.7H1977.34V1280.9H1978.46V1163.1H1979.58V1022.9H1980.70V1146.3H1981.83V1224.8H1982.95V1196.8H1984.07V1219.2H1985.19V1180.0H1986.31V1208.0H1987.43V1174.3H1988.55V1252.9H1989.67V1252.9H1990.80V1269.7H1991.92V1286.5H1993.04V1258.5H1994.16V1286.5H1995.28V1264.1H1996.40V1275.3H1997.52V1286.5H1998.65V1320.20ZM2173.58 1320.20V1297.8H2174.70V1297.8H2175.82V1297.8H2176.94V1297.8H2178.06V1297.8H2179.18V1297.8H2180.30V1303.4H2181.43V1297.8H2182.55V1297.8H2183.67V1269.7H2184.79V1286.5H2185.91V1095.8H2187.03V1056.5H2188.15V1079.0H2189.28V1101.4H2190.40V1028.5H2191.52V944.3H2192.64V972.4H2193.76V1107.0H2194.88V1118.2H2196.00V1011.7H2197.13V1157.5H2198.25V983.6H2199.37V1073.4H2200.49V994.8H2201.61V1039.7H2202.73V1224.8H2203.85V1252.9H2204.97V1196.8H2206.10V1202.4H2207.22V1264.1H2208.34V1252.9H2209.46V1252.9H2210.58V994.8H2211.70V955.6H2212.82V1101.4H2213.95V1056.5H2215.07V1067.8H2216.19V1213.6H2217.31V1258.5H2218.43V1264.1H2219.55V1269.7H2220.67V1241.7H2221.80V1202.4H2222.92V1000.4H2224.04V1073.4H2225.16V1073.4H2226.28V1056.5H2227.40V1067.8H2228.52V1264.1H2229.64V1039.7H2230.77V1045.3H2231.89V1252.9H2233.01V1269.7H2234.13V1151.9H2235.25V1129.5H2236.37V1219.2H2237.49V1236.0H2238.62V1236.0H2239.74V1236.0H2240.86V1107.0H2241.98V1045.3H2243.10V1247.3H2244.22V1280.9H2245.34V1280.9H2246.46V1280.9H2247.59V1286.5H2248.71V1280.9H2249.83V1280.9H2250.95V1292.2H2252.07V1280.9H2253.19V1269.7H2254.31V1213.6H2255.44V1280.9H2256.56V1280.9H2257.68V1275.3H2258.80V1286.5H2259.92V1280.9H2261.04V1280.9H2262.16V1286.5H2263.29V1236.0H2264.41V1252.9H2265.53V1224.8H2266.65V1157.5H2267.77V1135.1H2268.89V1230.4H2270.01V1275.3H2271.13V1022.9H2272.26V1219.2H2273.38V1123.9H2274.50V1101.4H2275.62V1090.2H2276.74V1269.7H2277.86V1219.2H2278.98V1280.9H2280.11V1292.2H2281.23V1275.3H2282.35V1292.2H2283.47V1286.5H2284.59V1219.2H2285.71V1264.1H2286.83V1264.1H2287.95V1269.7H2289.08V1280.9H2290.20V1258.5H2291.32V1252.9H2292.44V1258.5H2293.56V1280.9H2294.68V1269.7H2295.80V1208.0H2296.93V1196.8H2298.05V1219.2H2299.17V1241.7H2300.29V1208.0H2301.41V1208.0H2302.53V1264.1H2303.65V1264.1H2304.78V1236.0H2305.90V1264.1H2307.02V1241.7H2308.14V1320.20Z" fill="#239170"/><rect x="2417.35" y="819.30" width="10" height="504.90" fill="url(#shR)"/><rect x="159.70" y="1321.20" width="2258.65" height="9" fill="url(#shB)"/><line x1="155.7" y1="1321.00" x2="2417.35" y2="1321.00" stroke="#7a7a7a" stroke-width="1.6"/><line x1="154.90" y1="815.30" x2="154.90" y2="1321.20" stroke="#666" stroke-width="1.8"/><line x1="155.70" y1="1321.70" x2="155.70" y2="1331.20" stroke="#b0b0b0" stroke-width="1"/><text x="115.24" y="1356.7" font-family='"Liberation Sans", sans-serif' font-size="20.5" textLength="80.9" lengthAdjust="spacingAndGlyphs" fill="#111">sam. 24</text><line x1="478.65" y1="1321.70" x2="478.65" y2="1331.20" stroke="#b0b0b0" stroke-width="1"/><text x="441.35" y="1356.7" font-family='"Liberation Sans", sans-serif' font-size="20.5" textLength="74.6" lengthAdjust="spacingAndGlyphs" fill="#111">dim. 25</text><line x1="801.60" y1="1321.70" x2="801.60" y2="1331.20" stroke="#b0b0b0" stroke-width="1"/><text x="767.41" y="1356.7" font-family='"Liberation Sans", sans-serif' font-size="20.5" textLength="68.4" lengthAdjust="spacingAndGlyphs" fill="#111">lun. 26</text><line x1="1124.55" y1="1321.70" x2="1124.55" y2="1331.20" stroke="#b0b0b0" stroke-width="1"/><text x="1086.59" y="1356.7" font-family='"Liberation Sans", sans-serif' font-size="20.5" textLength="75.9" lengthAdjust="spacingAndGlyphs" fill="#111">mar. 27</text><line x1="1447.50" y1="1321.70" x2="1447.50" y2="1331.20" stroke="#b0b0b0" stroke-width="1"/><text x="1409.54" y="1356.7" font-family='"Liberation Sans", sans-serif' font-size="20.5" textLength="75.9" lengthAdjust="spacingAndGlyphs" fill="#111">mer. 28</text><line x1="1770.45" y1="1321.70" x2="1770.45" y2="1331.20" stroke="#b0b0b0" stroke-width="1"/><text x="1736.26" y="1356.7" font-family='"Liberation Sans", sans-serif' font-size="20.5" textLength="68.4" lengthAdjust="spacingAndGlyphs" fill="#111">jeu. 29</text><line x1="2093.40" y1="1321.70" x2="2093.40" y2="1331.20" stroke="#b0b0b0" stroke-width="1"/><text x="2056.10" y="1356.7" font-family='"Liberation Sans", sans-serif' font-size="20.5" textLength="74.6" lengthAdjust="spacingAndGlyphs" fill="#111">ven. 30</text><text x="121.64" y="1327.40" font-family='"Liberation Sans", sans-serif' font-size="20.6" textLength="11.56" lengthAdjust="spacingAndGlyphs" fill="#333">0</text><text x="110.06" y="1271.30" font-family='"Liberation Sans", sans-serif' font-size="20.6" textLength="23.14" lengthAdjust="spacingAndGlyphs" fill="#333">10</text><text x="110.06" y="1215.20" font-family='"Liberation Sans", sans-serif' font-size="20.6" textLength="23.14" lengthAdjust="spacingAndGlyphs" fill="#333">20</text><text x="110.06" y="1159.10" font-family='"Liberation Sans", sans-serif' font-size="20.6" textLength="23.14" lengthAdjust="spacingAndGlyphs" fill="#333">30</text><text x="110.06" y="1103.00" font-family='"Liberation Sans", sans-serif' font-size="20.6" textLength="23.14" lengthAdjust="spacingAndGlyphs" fill="#333">40</text><text x="110.06" y="1046.90" font-family='"Liberation Sans", sans-serif' font-size="20.6" textLength="23.14" lengthAdjust="spacingAndGlyphs" fill="#333">50</text><text x="110.06" y="990.80" font-family='"Liberation Sans", sans-serif' font-size="20.6" textLength="23.14" lengthAdjust="spacingAndGlyphs" fill="#333">60</text><text x="110.06" y="934.70" font-family='"Liberation Sans", sans-serif' font-size="20.6" textLength="23.14" lengthAdjust="spacingAndGlyphs" fill="#333">70</text><text x="110.06" y="878.60" font-family='"Liberation Sans", sans-serif' font-size="20.6" textLength="23.14" lengthAdjust="spacingAndGlyphs" fill="#333">80</text><text x="110.06" y="822.50" font-family='"Liberation Sans", sans-serif' font-size="20.6" textLength="23.14" lengthAdjust="spacingAndGlyphs" fill="#333">90</text><text transform="translate(85.5 1067.2) rotate(-90)" text-anchor="middle" font-family='"Liberation Sans", sans-serif' font-size="22" fill="#333">kW</text><rect x="562.50" y="806.30" width="410.60" height="57.40" rx="9" fill="#fff" stroke="#808080" stroke-width="3.6"/><text x="610.7" y="846.4" font-family='"Liberation Sans", sans-serif' font-size="30" textLength="334.5" lengthAdjust="spacingAndGlyphs" fill="#000" xml:space="preserve">Consommation: 1 569 kWh</text><rect x="1100.80" y="806.30" width="410.40" height="57.40" rx="9" fill="#fff" stroke="#808080" stroke-width="3.6"/><text x="1222.3" y="846.2" font-family='"Liberation Sans", sans-serif' font-size="30" textLength="188.4" lengthAdjust="spacingAndGlyphs" fill="#000" xml:space="preserve">P Max :  81 kW</text><rect x="1610.80" y="806.30" width="410.40" height="57.40" rx="9" fill="#fff" stroke="#808080" stroke-width="3.6"/><text x="1746.8" y="846.2" font-family='"Liberation Sans", sans-serif' font-size="30" textLength="159" lengthAdjust="spacingAndGlyphs" fill="#000" xml:space="preserve">P min : 1 kW</text><rect x="2322" y="1322" width="115.7" height="56" fill="#fff"/><g fill="none" stroke="#0b6fbb" stroke-width="5.2" stroke-linecap="round"><path d="M2361.3 1344.2A12.2 12.2 0 1 0 2361.7 1350.2H2350"/><path d="M2370.6 1350A7 7 0 1 1 2382.6 1350.6L2371.8 1361" stroke-linecap="butt"/><path d="M2369.5 1361H2385.6" stroke-linecap="butt"/></g><path d="M2392.5 1324.5L2383.3 1338L2393 1339.3L2389 1362.8L2400 1338.8L2391.4 1337.3Z" fill="#ea5a26"/><path d="M2402.1 1339H2424.3L2418.9 1344.6H2401Z M2398.6 1347.9H2418L2412.9 1353.9H2396.8Z M2395 1357.2H2416.8L2411.1 1363.2H2392.9Z" fill="#f39423"/><text x="2392.6" y="1334.6" font-family='"Liberation Sans", sans-serif' font-weight="bold" font-size="7.6" textLength="31" lengthAdjust="spacingAndGlyphs" fill="#ea5a26">FRANCE</text><rect x="2339.5" y="1365.4" width="74.6" height="2" fill="#5a9ad8" fill-opacity="0.45"/></svg></body></html>
